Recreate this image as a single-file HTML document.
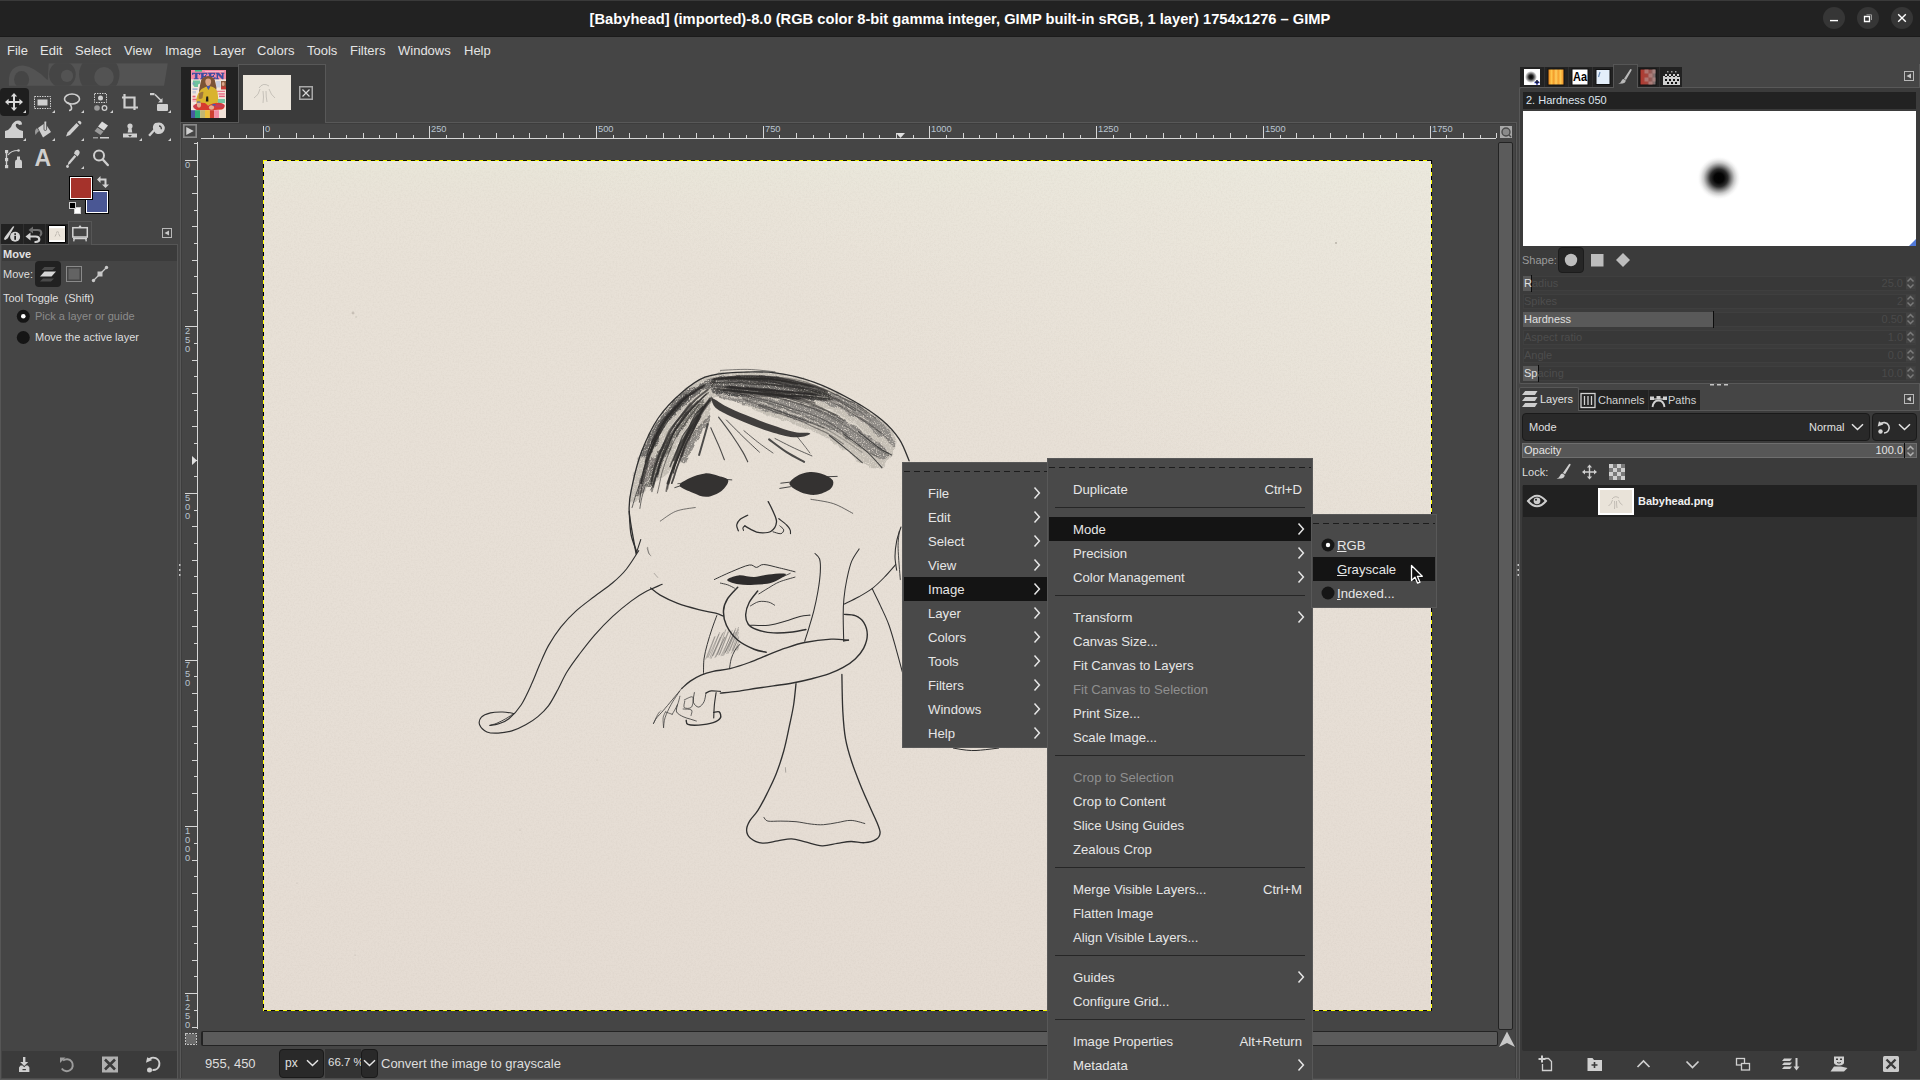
<!DOCTYPE html>
<html lang="en">
<head>
<meta charset="utf-8">
<title>[Babyhead] (imported)-8.0 – GIMP</title>
<style>
*{box-sizing:border-box;margin:0;padding:0}
html,body{width:1920px;height:1080px;overflow:hidden;background:#454545}
body{font-family:"Liberation Sans",sans-serif;font-size:13px;color:#dedede;position:relative;-webkit-font-smoothing:antialiased}
.abs{position:absolute}
.t{position:absolute;white-space:nowrap;line-height:1}
svg{position:absolute;overflow:visible}
#titlebar{position:absolute;left:0;top:0;width:1920px;height:37px;background:#222222;border-top:1px solid #3a3a3a;border-bottom:1px solid #1b1b1b}
#title{position:absolute;left:0;width:1920px;top:10px;text-align:center;font-weight:700;font-size:14.7px;color:#ffffff;line-height:17px;letter-spacing:0}
.wbtn{position:absolute;top:6px;width:22px;height:22px;border-radius:50%;background:#363636}
#menubar{position:absolute;left:0;top:37px;width:1920px;height:27px;background:#454545}
#menubar span{position:absolute;top:5px;font-size:13px;line-height:17px;color:#e4e4e4}
.menu{position:absolute;background:#494949;border:1px solid #585858}
.mi{position:absolute;left:1px;right:1px;height:24px;font-size:13.15px;line-height:26px;color:#e6e6e6;white-space:nowrap}
.mi.sel{background:#141414}
.mi.dis{color:#8f8f8f}
.mi b{font-weight:400;position:absolute;right:9px;top:0}
.mi u{text-decoration:underline;text-underline-offset:1px}
.sep{position:absolute;height:1px;background:#262626}
.tear{position:absolute;height:1px;background:repeating-linear-gradient(90deg,#1c1c1c 0,#1c1c1c 6px,transparent 6px,transparent 10px)}
.arr{position:absolute;width:10px;height:14px}
</style>
</head>
<body>
<div id="titlebar">
  <div id="title">[Babyhead] (imported)-8.0 (RGB color 8-bit gamma integer, GIMP built-in sRGB, 1 layer) 1754x1276 – GIMP</div>
  <div class="wbtn" style="left:1823px"></div>
  <div class="wbtn" style="left:1857px"></div>
  <div class="wbtn" style="left:1891px"></div>
  <svg style="left:1822px;top:6px" width="92" height="23" viewBox="0 0 92 23">
    <path d="M8 13.600h8" stroke="#fff" stroke-width="1.400" fill="none"/>
    <path d="M42.500 9.500h5v5h-5z" stroke="#fff" stroke-width="1.300" fill="none"/><path d="M44.500 7.800h5v5.200" stroke="#9a9a9a" stroke-width="1" fill="none"/>
    <path d="M76.200 7.200l7.600 7.600 M83.800 7.200l-7.600 7.600" stroke="#fff" stroke-width="1.400" fill="none"/>
  </svg>
</div>
<div id="menubar">
  <span style="left:7px">File</span><span style="left:40px">Edit</span><span style="left:75px">Select</span><span style="left:124px">View</span><span style="left:165px">Image</span><span style="left:213px">Layer</span><span style="left:257px">Colors</span><span style="left:307px">Tools</span><span style="left:350px">Filters</span><span style="left:398px">Windows</span><span style="left:464px">Help</span>
</div>
<div class="abs" style="left:181px;top:67px;width:57px;height:55px;background:#222222"></div>
<div class="abs" style="left:238px;top:64px;width:88px;height:59px;background:#3b3b3b;border:1px solid #585858;border-bottom:none"></div>
<div class="abs" style="left:180px;top:122px;width:1337px;height:957px;border:1px solid #585858;border-bottom:none;box-shadow:inset 1px 1px 0 #3d3d3d,inset -1px 0 0 #3d3d3d"></div>
<div class="abs" style="left:239px;top:122px;width:86px;height:1px;background:#3b3b3b"></div>
<svg style="left:191px;top:70px;overflow:hidden" width="35" height="48" viewBox="0 0 35 48">
<defs><filter id="tb" x="-5%" y="-5%" width="110%" height="110%"><feGaussianBlur stdDeviation="0.45"/></filter><clipPath id="tc"><rect width="35" height="48"/></clipPath></defs>
<g clip-path="url(#tc)"><rect width="35" height="48" fill="#f3e6dc"/>
<g filter="url(#tb)">
<rect x="-1" y="-1" width="37" height="10.300" fill="#f58aa6"/>
<rect x="4" y="0" width="7" height="1.600" fill="#3dbb84"/><rect x="14" y="1" width="19" height=".800" fill="#f7c3cf"/>
<text x="1.300" y="8.800" font-family="Liberation Serif,serif" font-weight="700" font-size="8.600" fill="#3a4da2" stroke="#3a4da2" stroke-width=".500" textLength="32" lengthAdjust="spacingAndGlyphs">TEEN</text>
<path d="M2 10.500h7v3l-2 1v2.500h-3.500l-1.500-2z" fill="#58bd92" opacity=".85"/><rect x="1.300" y="12.500" width="2.500" height="2" fill="#7f95c8" opacity=".7"/>
<rect x="1.500" y="18.500" width="5" height="1.200" fill="#6b83c0" opacity=".8"/><rect x="1.500" y="21" width="3.500" height="2.500" fill="#a9b4d6" opacity=".6"/>
<rect x="1.500" y="25.700" width="3" height="1.700" fill="#e8607c"/><rect x="1.500" y="28.700" width="6.500" height="1.500" fill="#e8607c"/><rect x="1.500" y="30.500" width="4" height="1.200" fill="#ec9aa8" opacity=".8"/>
<rect x="25" y="11" width="4.500" height="6.500" fill="#b9c3de" opacity=".7"/>
<rect x="30" y="11" width="5" height="8.300" fill="#8a5a3e"/><ellipse cx="32.200" cy="14" rx="1.400" ry="1.900" fill="#dca58a"/><path d="M30 16.800q2.300-1.200 5 0v2.500h-5z" fill="#c63a34"/>
<rect x="24.500" y="20.800" width="9.500" height="1" fill="#e8607c"/><rect x="27.500" y="23.300" width="6.300" height="1.300" fill="#e8607c"/><rect x="28" y="25.600" width="5.800" height="1.500" fill="#e8607c"/>
<path d="M26.500 29h7.500v4h-7l-1-1.500z" fill="#5fc29a" opacity=".85"/>
<path d="M9.500 13 Q10 6.500 17 6 Q24 6.500 24.500 13 Q26 18 25 21 L12.500 22 Q10.500 27.500 8 27 Q7.500 20 9.500 13Z" fill="#7c5336"/>
<path d="M14.300 11.500Q14.300 8.400 17.200 8.400Q20.200 8.400 20.100 11.500Q20 15 17.200 16.400Q14.400 15 14.300 11.500Z" fill="#dba486"/>
<path d="M5.500 33 Q4.500 27 8.500 21.500 Q11 18 15.500 16.500 L17.500 19.500 L19.300 16.300 Q25 17.500 26.500 22 Q27.800 28 26.500 33 L22 35 L9 35Z" fill="#d9b32f"/>
<path d="M15.500 16.500L17.500 20L19.300 16.300L18 15.800L16.700 15.900Z" fill="#3f59b4"/>
<path d="M15.300 26.500h1.900l.2 5h-2.600z" fill="#1b1b1b"/>
<path d="M8 23.500q2.500-2.500 4.500-1.500l-1 6q-2 1.500-4 .5z" fill="#8a6040" opacity=".75"/>
<path d="M2 36 Q6 31.500 14 33 L17 35.500 L22 33.500 Q30 31.500 33.700 35 Q34 38 31 39.500 L20 40.300 L8 40.300 Q3 40 2 36Z" fill="#d63a2f"/>
<path d="M24 34.500h8.500v3h-8.500z" fill="#b8407a" opacity=".55"/><path d="M2.500 34.500h3.500v4h-3.500z" fill="#b8407a" opacity=".4"/>
<ellipse cx="8" cy="34.800" rx="2.100" ry="2.800" fill="#e3ae93"/><ellipse cx="20.500" cy="37.500" rx="2.600" ry="2.200" fill="#e3ae93"/>
<rect x="6" y="31.500" width="3.300" height="1.100" fill="#3f59b4"/><rect x="21.500" y="34" width="3" height="1.600" fill="#3f59b4"/>
</g>
<rect x="0" y="40.200" width="4" height="8" fill="#4a58a0"/><rect x="4" y="40.200" width="5.200" height="8" fill="#2fae78"/><rect x="9.200" y="40.200" width="4.800" height="8" fill="#c2b672"/><rect x="14" y="40.200" width="4.900" height="8" fill="#efc03c"/><rect x="18.900" y="40.200" width="4.200" height="8" fill="#cf4030"/><rect x="23.100" y="40.200" width="4.900" height="8" fill="#f28ea6"/><rect x="28" y="40.200" width="7" height="8" fill="#f1e2d8"/>
</g></svg>
<svg style="left:243px;top:75px" width="48" height="35" viewBox="0 0 48 35"><rect width="48" height="35" fill="#ebe5db"/>
<path d="M16 13 q4 -6 10 -2 M17 14 q-1 6 -6 9 M26 14 q2 6 6 9 M20 16 q1 6 0 12 M23 16 q0 6 1 11" stroke="#8a8580" stroke-width=".7" fill="none" opacity=".55"/></svg>
<svg style="left:299px;top:86px" width="14" height="14" viewBox="0 0 14 14"><rect x=".75" y=".75" width="12.5" height="12.5" fill="none" stroke="#a8a8a8" stroke-width="1.5"/><path d="M3.5 3.5l7 7M10.5 3.5l-7 7" stroke="#d8d8d8" stroke-width="1.2"/></svg>
<svg style="left:0;top:0" width="1920" height="1080" viewBox="0 0 1920 1080" shape-rendering="crispEdges"><rect x="201" y="138" width="1295" height="1" fill="#d6d6d6"/><rect x="213" y="135" width="1" height="3" fill="#d6d6d6"/><rect x="229" y="133" width="1" height="5" fill="#d6d6d6"/><rect x="246" y="135" width="1" height="3" fill="#d6d6d6"/><rect x="263" y="126" width="1" height="12" fill="#d6d6d6"/><rect x="279" y="135" width="1" height="3" fill="#d6d6d6"/><rect x="296" y="133" width="1" height="5" fill="#d6d6d6"/><rect x="313" y="135" width="1" height="3" fill="#d6d6d6"/><rect x="329" y="133" width="1" height="5" fill="#d6d6d6"/><rect x="346" y="135" width="1" height="3" fill="#d6d6d6"/><rect x="363" y="133" width="1" height="5" fill="#d6d6d6"/><rect x="379" y="135" width="1" height="3" fill="#d6d6d6"/><rect x="396" y="133" width="1" height="5" fill="#d6d6d6"/><rect x="413" y="135" width="1" height="3" fill="#d6d6d6"/><rect x="429" y="126" width="1" height="12" fill="#d6d6d6"/><rect x="446" y="135" width="1" height="3" fill="#d6d6d6"/><rect x="463" y="133" width="1" height="5" fill="#d6d6d6"/><rect x="479" y="135" width="1" height="3" fill="#d6d6d6"/><rect x="496" y="133" width="1" height="5" fill="#d6d6d6"/><rect x="513" y="135" width="1" height="3" fill="#d6d6d6"/><rect x="529" y="133" width="1" height="5" fill="#d6d6d6"/><rect x="546" y="135" width="1" height="3" fill="#d6d6d6"/><rect x="563" y="133" width="1" height="5" fill="#d6d6d6"/><rect x="579" y="135" width="1" height="3" fill="#d6d6d6"/><rect x="596" y="126" width="1" height="12" fill="#d6d6d6"/><rect x="613" y="135" width="1" height="3" fill="#d6d6d6"/><rect x="629" y="133" width="1" height="5" fill="#d6d6d6"/><rect x="646" y="135" width="1" height="3" fill="#d6d6d6"/><rect x="663" y="133" width="1" height="5" fill="#d6d6d6"/><rect x="679" y="135" width="1" height="3" fill="#d6d6d6"/><rect x="696" y="133" width="1" height="5" fill="#d6d6d6"/><rect x="713" y="135" width="1" height="3" fill="#d6d6d6"/><rect x="729" y="133" width="1" height="5" fill="#d6d6d6"/><rect x="746" y="135" width="1" height="3" fill="#d6d6d6"/><rect x="763" y="126" width="1" height="12" fill="#d6d6d6"/><rect x="779" y="135" width="1" height="3" fill="#d6d6d6"/><rect x="796" y="133" width="1" height="5" fill="#d6d6d6"/><rect x="813" y="135" width="1" height="3" fill="#d6d6d6"/><rect x="829" y="133" width="1" height="5" fill="#d6d6d6"/><rect x="846" y="135" width="1" height="3" fill="#d6d6d6"/><rect x="863" y="133" width="1" height="5" fill="#d6d6d6"/><rect x="879" y="135" width="1" height="3" fill="#d6d6d6"/><rect x="896" y="133" width="1" height="5" fill="#d6d6d6"/><rect x="913" y="135" width="1" height="3" fill="#d6d6d6"/><rect x="929" y="126" width="1" height="12" fill="#d6d6d6"/><rect x="946" y="135" width="1" height="3" fill="#d6d6d6"/><rect x="963" y="133" width="1" height="5" fill="#d6d6d6"/><rect x="979" y="135" width="1" height="3" fill="#d6d6d6"/><rect x="996" y="133" width="1" height="5" fill="#d6d6d6"/><rect x="1013" y="135" width="1" height="3" fill="#d6d6d6"/><rect x="1029" y="133" width="1" height="5" fill="#d6d6d6"/><rect x="1046" y="135" width="1" height="3" fill="#d6d6d6"/><rect x="1063" y="133" width="1" height="5" fill="#d6d6d6"/><rect x="1080" y="135" width="1" height="3" fill="#d6d6d6"/><rect x="1096" y="126" width="1" height="12" fill="#d6d6d6"/><rect x="1113" y="135" width="1" height="3" fill="#d6d6d6"/><rect x="1130" y="133" width="1" height="5" fill="#d6d6d6"/><rect x="1146" y="135" width="1" height="3" fill="#d6d6d6"/><rect x="1163" y="133" width="1" height="5" fill="#d6d6d6"/><rect x="1180" y="135" width="1" height="3" fill="#d6d6d6"/><rect x="1196" y="133" width="1" height="5" fill="#d6d6d6"/><rect x="1213" y="135" width="1" height="3" fill="#d6d6d6"/><rect x="1230" y="133" width="1" height="5" fill="#d6d6d6"/><rect x="1246" y="135" width="1" height="3" fill="#d6d6d6"/><rect x="1263" y="126" width="1" height="12" fill="#d6d6d6"/><rect x="1280" y="135" width="1" height="3" fill="#d6d6d6"/><rect x="1296" y="133" width="1" height="5" fill="#d6d6d6"/><rect x="1313" y="135" width="1" height="3" fill="#d6d6d6"/><rect x="1330" y="133" width="1" height="5" fill="#d6d6d6"/><rect x="1346" y="135" width="1" height="3" fill="#d6d6d6"/><rect x="1363" y="133" width="1" height="5" fill="#d6d6d6"/><rect x="1380" y="135" width="1" height="3" fill="#d6d6d6"/><rect x="1396" y="133" width="1" height="5" fill="#d6d6d6"/><rect x="1413" y="135" width="1" height="3" fill="#d6d6d6"/><rect x="1430" y="126" width="1" height="12" fill="#d6d6d6"/><rect x="1446" y="135" width="1" height="3" fill="#d6d6d6"/><rect x="1463" y="133" width="1" height="5" fill="#d6d6d6"/><rect x="1480" y="135" width="1" height="3" fill="#d6d6d6"/><rect x="1496" y="133" width="1" height="5" fill="#d6d6d6"/><rect x="197" y="142" width="1" height="887" fill="#d6d6d6"/><rect x="194" y="143" width="3" height="1" fill="#d6d6d6"/><rect x="185" y="160" width="12" height="1" fill="#d6d6d6"/><rect x="194" y="176" width="3" height="1" fill="#d6d6d6"/><rect x="192" y="193" width="5" height="1" fill="#d6d6d6"/><rect x="194" y="210" width="3" height="1" fill="#d6d6d6"/><rect x="192" y="226" width="5" height="1" fill="#d6d6d6"/><rect x="194" y="243" width="3" height="1" fill="#d6d6d6"/><rect x="192" y="260" width="5" height="1" fill="#d6d6d6"/><rect x="194" y="276" width="3" height="1" fill="#d6d6d6"/><rect x="192" y="293" width="5" height="1" fill="#d6d6d6"/><rect x="194" y="310" width="3" height="1" fill="#d6d6d6"/><rect x="185" y="326" width="12" height="1" fill="#d6d6d6"/><rect x="194" y="343" width="3" height="1" fill="#d6d6d6"/><rect x="192" y="360" width="5" height="1" fill="#d6d6d6"/><rect x="194" y="376" width="3" height="1" fill="#d6d6d6"/><rect x="192" y="393" width="5" height="1" fill="#d6d6d6"/><rect x="194" y="410" width="3" height="1" fill="#d6d6d6"/><rect x="192" y="426" width="5" height="1" fill="#d6d6d6"/><rect x="194" y="443" width="3" height="1" fill="#d6d6d6"/><rect x="192" y="460" width="5" height="1" fill="#d6d6d6"/><rect x="194" y="476" width="3" height="1" fill="#d6d6d6"/><rect x="185" y="493" width="12" height="1" fill="#d6d6d6"/><rect x="194" y="510" width="3" height="1" fill="#d6d6d6"/><rect x="192" y="526" width="5" height="1" fill="#d6d6d6"/><rect x="194" y="543" width="3" height="1" fill="#d6d6d6"/><rect x="192" y="560" width="5" height="1" fill="#d6d6d6"/><rect x="194" y="576" width="3" height="1" fill="#d6d6d6"/><rect x="192" y="593" width="5" height="1" fill="#d6d6d6"/><rect x="194" y="610" width="3" height="1" fill="#d6d6d6"/><rect x="192" y="626" width="5" height="1" fill="#d6d6d6"/><rect x="194" y="643" width="3" height="1" fill="#d6d6d6"/><rect x="185" y="660" width="12" height="1" fill="#d6d6d6"/><rect x="194" y="676" width="3" height="1" fill="#d6d6d6"/><rect x="192" y="693" width="5" height="1" fill="#d6d6d6"/><rect x="194" y="710" width="3" height="1" fill="#d6d6d6"/><rect x="192" y="726" width="5" height="1" fill="#d6d6d6"/><rect x="194" y="743" width="3" height="1" fill="#d6d6d6"/><rect x="192" y="760" width="5" height="1" fill="#d6d6d6"/><rect x="194" y="776" width="3" height="1" fill="#d6d6d6"/><rect x="192" y="793" width="5" height="1" fill="#d6d6d6"/><rect x="194" y="810" width="3" height="1" fill="#d6d6d6"/><rect x="185" y="826" width="12" height="1" fill="#d6d6d6"/><rect x="194" y="843" width="3" height="1" fill="#d6d6d6"/><rect x="192" y="860" width="5" height="1" fill="#d6d6d6"/><rect x="194" y="876" width="3" height="1" fill="#d6d6d6"/><rect x="192" y="893" width="5" height="1" fill="#d6d6d6"/><rect x="194" y="910" width="3" height="1" fill="#d6d6d6"/><rect x="192" y="926" width="5" height="1" fill="#d6d6d6"/><rect x="194" y="943" width="3" height="1" fill="#d6d6d6"/><rect x="192" y="960" width="5" height="1" fill="#d6d6d6"/><rect x="194" y="976" width="3" height="1" fill="#d6d6d6"/><rect x="185" y="993" width="12" height="1" fill="#d6d6d6"/><rect x="194" y="1010" width="3" height="1" fill="#d6d6d6"/><rect x="192" y="1027" width="5" height="1" fill="#d6d6d6"/></svg>
<div class="t" style="left:265px;top:125px;font-size:9.3px;color:#b9c4cf">0</div>
<div class="t" style="left:431px;top:125px;font-size:9.3px;color:#b9c4cf">250</div>
<div class="t" style="left:598px;top:125px;font-size:9.3px;color:#b9c4cf">500</div>
<div class="t" style="left:765px;top:125px;font-size:9.3px;color:#b9c4cf">750</div>
<div class="t" style="left:931px;top:125px;font-size:9.3px;color:#b9c4cf">1000</div>
<div class="t" style="left:1098px;top:125px;font-size:9.3px;color:#b9c4cf">1250</div>
<div class="t" style="left:1265px;top:125px;font-size:9.3px;color:#b9c4cf">1500</div>
<div class="t" style="left:1432px;top:125px;font-size:9.3px;color:#b9c4cf">1750</div>
<div class="t" style="left:185px;top:161px;font-size:9.3px;color:#b9c4cf">0</div>
<div class="t" style="left:185px;top:327px;font-size:9.3px;color:#b9c4cf">2</div>
<div class="t" style="left:185px;top:336px;font-size:9.3px;color:#b9c4cf">5</div>
<div class="t" style="left:185px;top:345px;font-size:9.3px;color:#b9c4cf">0</div>
<div class="t" style="left:185px;top:494px;font-size:9.3px;color:#b9c4cf">5</div>
<div class="t" style="left:185px;top:503px;font-size:9.3px;color:#b9c4cf">0</div>
<div class="t" style="left:185px;top:512px;font-size:9.3px;color:#b9c4cf">0</div>
<div class="t" style="left:185px;top:661px;font-size:9.3px;color:#b9c4cf">7</div>
<div class="t" style="left:185px;top:670px;font-size:9.3px;color:#b9c4cf">5</div>
<div class="t" style="left:185px;top:679px;font-size:9.3px;color:#b9c4cf">0</div>
<div class="t" style="left:185px;top:827px;font-size:9.3px;color:#b9c4cf">1</div>
<div class="t" style="left:185px;top:836px;font-size:9.3px;color:#b9c4cf">0</div>
<div class="t" style="left:185px;top:845px;font-size:9.3px;color:#b9c4cf">0</div>
<div class="t" style="left:185px;top:854px;font-size:9.3px;color:#b9c4cf">0</div>
<div class="t" style="left:185px;top:994px;font-size:9.3px;color:#b9c4cf">1</div>
<div class="t" style="left:185px;top:1003px;font-size:9.3px;color:#b9c4cf">2</div>
<div class="t" style="left:185px;top:1012px;font-size:9.3px;color:#b9c4cf">5</div>
<div class="t" style="left:185px;top:1021px;font-size:9.3px;color:#b9c4cf">0</div>
<svg style="left:183px;top:124px" width="14" height="14" viewBox="0 0 13 13"><rect x=".75" y=".75" width="11.5" height="11.5" fill="none" stroke="#8a8a8a" stroke-width="1.5"/><path d="M3 2.8v7.4l7-3.7z" fill="#d0d0d0"/></svg>
<svg style="left:1500px;top:126px" width="12" height="12" viewBox="0 0 12 12"><rect width="12" height="12" fill="#a8a8a8"/><circle cx="6" cy="6" r="4" fill="#8a8a8a" stroke="#4a4a4a" stroke-width="1.4"/><path d="M9 9l2 2" stroke="#4a4a4a" stroke-width="1.4"/></svg>
<svg style="left:185px;top:1033px" width="12" height="12" viewBox="0 0 12 12" shape-rendering="crispEdges"><rect x="1" y="1" width="10" height="10" fill="#6a6a6a"/><rect x=".5" y=".5" width="11" height="11" fill="none" stroke="#c0c0c0" stroke-width="1" stroke-dasharray="2 1"/></svg>
<svg style="left:1499px;top:1031px" width="16" height="16" viewBox="0 0 16 16"><path d="M8 0.5L16 16L8 12L0 16Z" fill="#c8c8c8"/></svg>
<svg style="left:896px;top:133px" width="9" height="5" viewBox="0 0 9 5"><path d="M0 0h9l-4.500 5z" fill="#e0e0e0"/></svg>
<svg style="left:192px;top:456px" width="5" height="9" viewBox="0 0 5 9"><path d="M0 0v9l5-4.500z" fill="#e0e0e0"/></svg>
<div class="abs" style="left:1498px;top:142px;width:15px;height:888px;background:#5b5b5b;border:1px solid #232323;border-radius:2px"></div>
<div class="abs" style="left:201px;top:1031px;width:1297px;height:15px;background:#5b5b5b;border:1px solid #232323;border-left-width:2px;border-radius:2px"></div>
<div class="abs" id="paper" style="left:263px;top:160px;width:1169px;height:851px;background:linear-gradient(205deg,rgba(237,235,224,.65) 0%,rgba(237,235,224,0) 32%),linear-gradient(180deg,#e9e6d9 0%,#e9e3d8 5%,#e8e1d7 14%,#e7dfd6 60%,#e5dcd3 100%)"></div>
<svg style="left:263px;top:160px" width="1169" height="851" viewBox="0 0 1169 851"><defs><filter id="papernoise" x="0" y="0" width="100%" height="100%"><feTurbulence type="fractalNoise" baseFrequency="0.6" numOctaves="2" seed="11"/><feColorMatrix type="matrix" values="0 0 0 0 0.35  0 0 0 0 0.30  0 0 0 0 0.25  0 0 0 1.6 -0.62"/></filter></defs><rect width="1169" height="851" filter="url(#papernoise)" opacity="0.10"/></svg>
<div class="abs ants" style="left:263px;top:160px;width:1169px;height:1px;background:repeating-linear-gradient(90deg,#ffff00 0,#ffff00 4px,#000 4px,#000 8px)"></div>
<div class="abs ants" style="left:263px;top:1010px;width:1169px;height:1px;background:repeating-linear-gradient(90deg,#000 0,#000 4px,#ffff00 4px,#ffff00 8px)"></div>
<div class="abs ants" style="left:263px;top:160px;width:1px;height:851px;background:repeating-linear-gradient(180deg,#ffff00 0,#ffff00 4px,#000 4px,#000 8px)"></div>
<div class="abs ants" style="left:1431px;top:160px;width:1px;height:851px;background:repeating-linear-gradient(180deg,#000 0,#000 4px,#ffff00 4px,#ffff00 8px)"></div>
<svg id="drawing" style="left:0;top:0" width="1920" height="1080" viewBox="0 0 1920 1080">
<defs><filter id="rough" x="-5%" y="-5%" width="110%" height="110%"><feTurbulence type="fractalNoise" baseFrequency="0.11" numOctaves="2" seed="4" result="n1"/><feDisplacementMap in="SourceGraphic" in2="n1" scale="6" xChannelSelector="R" yChannelSelector="G" result="d"/><feTurbulence type="fractalNoise" baseFrequency="0.85" numOctaves="1" seed="7" result="n2"/><feColorMatrix in="n2" type="matrix" values="0 0 0 0 0  0 0 0 0 0  0 0 0 0 0  0 0 0 3.4 -0.62" result="mask"/><feComposite in="d" in2="mask" operator="in"/></filter></defs>
<g filter="url(#rough)">
<path d="M708.9 375.3 C718.0 371.9 725.1 372.7 736.1 372.4 C747.1 372.1 762.0 371.6 775.0 373.3 C788.0 375.0 800.8 378.1 813.8 382.7 C826.8 387.3 841.4 394.6 852.7 400.9 C864.1 407.2 874.5 413.6 881.9 420.4 C889.3 427.1 897.4 433.7 897.4 441.4 C897.4 449.1 888.0 463.2 881.9 466.6 C875.8 470.0 870.2 466.8 860.5 461.8 C850.8 456.8 834.6 442.7 823.6 436.5 C812.6 430.3 805.8 429.2 794.4 424.8 C783.0 420.4 768.5 415.0 755.5 410.3 C742.5 405.6 724.4 396.1 716.6 396.7 C708.8 397.3 713.1 407.1 708.9 414.2 C704.7 421.3 697.2 430.7 691.4 439.4 C685.6 448.1 680.7 458.8 673.9 466.6 C667.1 474.4 657.3 479.9 650.5 486.1 C643.7 492.3 636.2 503.6 633.0 503.6 C629.8 503.6 629.6 494.9 631.1 486.1 C632.6 477.4 637.3 462.5 641.8 451.1 C646.3 439.8 651.7 427.7 658.3 418.0 C664.9 408.3 673.2 399.9 681.6 392.8 C690.0 385.7 699.8 378.7 708.9 375.3Z" fill="#4a4744" opacity="0.22" stroke="none"/>
<path d="M711.8 379.2 C715.4 376.3 725.6 376.5 736.1 376.2 C746.6 375.9 763.7 375.9 775.0 377.2 C786.3 378.5 795.0 381.2 804.1 384.0 C813.2 386.8 825.8 390.9 829.4 393.7 C833.0 396.5 831.3 400.1 825.5 400.9 C819.7 401.7 804.4 399.2 794.4 398.6 C784.4 398.1 774.9 398.1 765.2 397.6 C755.5 397.1 744.5 396.4 736.1 395.7 C727.7 395.0 718.8 396.4 714.7 393.7 C710.7 390.9 708.2 382.1 711.8 379.2Z" fill="#2e2c2b" opacity="0.55" stroke="none"/>
<path d="M716.6 389.9 C722.8 389.9 742.5 394.8 755.5 396.7 C768.5 398.6 781.4 398.6 794.4 401.5 C807.4 404.4 822.0 409.2 833.3 414.2 C844.6 419.2 853.3 425.5 862.4 431.6 C871.5 437.8 884.8 446.6 887.7 451.1 C890.6 455.7 885.7 460.5 879.9 458.9 C874.1 457.3 862.1 446.6 852.7 441.4 C843.3 436.2 834.0 431.7 823.6 427.8 C813.2 423.9 801.9 421.4 790.5 418.0 C779.1 414.6 767.5 410.9 755.5 407.3 C743.5 403.8 725.1 399.6 718.6 396.7 C712.1 393.8 710.5 389.9 716.6 389.9Z" fill="#3a3836" opacity="0.4" stroke="none"/>
<path d="M798.3 387.9 C801.9 387.2 814.5 389.4 823.6 391.8 C832.7 394.2 844.0 398.1 852.7 402.5 C861.4 406.9 869.5 412.5 876.0 418.0 C882.5 423.5 888.4 430.6 891.6 435.5 C894.9 440.4 897.5 447.2 895.5 447.2 C893.5 447.2 886.4 440.4 879.9 435.5 C873.4 430.6 865.0 423.2 856.6 418.0 C848.2 412.8 838.5 408.1 829.4 404.4 C820.3 400.7 807.4 398.4 802.2 395.7 C797.0 392.9 794.7 388.5 798.3 387.9Z" fill="#3a3836" opacity="0.38" stroke="none"/>
<path d="M709.8 379.2 C705.1 380.5 693.4 386.0 685.5 391.8 C677.6 397.6 668.7 405.9 662.2 414.2 C655.7 422.5 650.1 434.6 646.7 441.4 C643.3 448.2 641.3 452.7 641.8 455.0 C642.3 457.3 645.9 459.5 649.6 455.0 C653.3 450.5 658.9 435.6 664.2 427.8 C669.5 420.0 675.5 414.3 681.6 408.3 C687.8 402.3 695.8 395.9 701.1 391.8 C706.5 387.8 712.2 386.1 713.7 384.0 C715.2 381.9 714.5 377.9 709.8 379.2Z" fill="#2e2c2b" opacity="0.55" stroke="none"/>
<path d="M701.1 399.6 C697.1 401.9 687.8 411.0 681.6 418.0 C675.5 425.0 669.1 433.3 664.2 441.4 C659.4 449.5 655.4 459.2 652.5 466.6 C649.6 474.1 646.5 483.2 646.7 486.1 C646.9 489.0 650.6 488.6 653.5 484.1 C656.4 479.6 660.2 467.0 664.2 458.9 C668.2 450.8 672.9 442.6 677.8 435.5 C682.6 428.4 688.6 421.3 693.3 416.1 C698.0 410.9 704.6 407.1 705.9 404.4 C707.2 401.6 705.1 397.3 701.1 399.6Z" fill="#33312f" opacity="0.5" stroke="none"/>
<path d="M708.9 415.1 C706.8 416.2 700.8 423.1 697.2 427.8 C693.6 432.5 690.2 438.0 687.5 443.3 C684.8 448.6 681.0 456.8 680.7 459.8 C680.4 462.8 683.1 463.9 685.5 461.2 C687.9 458.4 692.2 448.6 695.3 443.3 C698.4 438.1 701.6 433.4 704.0 429.7 C706.4 426.0 709.0 423.4 709.8 421.0 C710.6 418.6 711.0 414.0 708.9 415.1Z" fill="#33312f" opacity="0.5" stroke="none"/>
<path d="M650.5 458.9 C648.2 461.3 644.1 470.6 641.8 476.4 C639.5 482.2 636.9 491.1 636.9 493.9 C636.9 496.6 639.8 495.8 641.8 492.9 C643.8 490.0 646.3 481.6 648.6 476.4 C650.9 471.2 655.1 464.7 655.4 461.8 C655.7 458.9 652.8 456.5 650.5 458.9Z" fill="#3a3836" opacity="0.45" stroke="none"/>
<path d="M714.7 388.9 C721.5 389.9 742.2 393.2 755.5 395.1 C768.8 397.0 781.4 397.5 794.4 400.2 C807.4 402.9 826.8 409.4 833.3 411.2" fill="none" stroke="#e9e3d9" stroke-width="1.41" opacity="0.55" stroke-linecap="round" stroke-linejoin="round"/>
<path d="M716.6 393.7 C723.7 395.3 745.1 399.6 759.4 403.5 C773.7 407.4 788.3 411.8 802.2 417.1 C816.1 422.4 836.2 432.4 843.0 435.5" fill="none" stroke="#e9e3d9" stroke-width="1.41" opacity="0.55" stroke-linecap="round" stroke-linejoin="round"/>
<path d="M794.4 391.8 C800.9 393.4 821.0 396.6 833.3 401.5 C845.6 406.4 862.5 417.8 868.3 421.0" fill="none" stroke="#e9e3d9" stroke-width="1.41" opacity="0.55" stroke-linecap="round" stroke-linejoin="round"/>
<path d="M705.9 394.7 C701.9 397.9 688.9 406.4 681.6 414.2 C674.3 422.0 665.4 436.9 662.2 441.4" fill="none" stroke="#e9e3d9" stroke-width="1.41" opacity="0.55" stroke-linecap="round" stroke-linejoin="round"/>
<path d="M707.9 406.4 C704.8 409.6 695.1 418.4 689.4 425.8 C683.7 433.2 676.5 446.9 673.9 451.1" fill="none" stroke="#e9e3d9" stroke-width="1.41" opacity="0.55" stroke-linecap="round" stroke-linejoin="round"/>
<path d="M823.6 408.3 C828.5 410.9 843.6 418.1 852.7 423.9 C861.8 429.7 873.8 440.1 878.0 443.3" fill="none" stroke="#e9e3d9" stroke-width="1.41" opacity="0.55" stroke-linecap="round" stroke-linejoin="round"/>
</g>
<path d="M712.8 398.6 C714.6 398.6 718.9 402.6 724.4 405.4 C729.9 408.1 738.0 411.9 745.8 415.1 C753.6 418.3 763.0 422.0 771.1 424.8 C779.2 427.6 787.9 430.6 794.4 432.0 C800.9 433.4 808.3 432.4 809.9 433.2 C811.5 433.9 807.3 435.9 804.1 436.5 C800.9 437.1 796.6 437.9 790.5 436.9 C784.4 435.9 775.0 433.2 767.2 430.7 C759.4 428.2 751.4 425.0 743.9 421.9 C736.4 418.8 727.5 414.9 722.5 412.2 C717.5 409.4 715.3 407.7 713.7 405.4 C712.1 403.1 711.0 398.6 712.8 398.6Z" fill="#2a2828" opacity="0.88" stroke="none"/>
<path d="M758.8 405.7 C761.4 406.7 769.1 409.7 774.3 411.6 C779.5 413.5 785.0 415.3 789.8 417.0 C794.6 418.7 798.5 420.1 802.9 422.0 C807.3 423.9 811.7 426.0 816.1 428.1 C820.5 430.2 825.0 431.7 829.5 434.4 C834.0 437.1 841.1 442.5 843.4 444.1" fill="none" stroke="#2c2a29" stroke-width="1.19" opacity="0.48" stroke-linecap="round"/>
<path d="M757.0 377.1 C758.5 377.1 763.1 377.2 765.9 377.3 C768.7 377.4 771.0 377.2 773.8 377.4 C776.6 377.6 779.6 378.2 782.6 378.7 C785.6 379.2 788.9 379.6 791.9 380.3 C794.9 381.0 797.7 382.2 800.7 383.0 C803.8 383.8 808.6 384.5 810.2 384.8" fill="none" stroke="#2c2a29" stroke-width="1.35" opacity="0.28" stroke-linecap="round"/>
<path d="M728.3 386.2 C730.3 386.4 736.2 386.8 740.5 387.4 C744.8 388.0 749.5 389.3 753.9 390.0 C758.2 390.7 762.0 390.8 766.6 391.7 C771.2 392.6 776.8 393.9 781.7 395.1 C786.6 396.3 791.7 397.7 796.2 399.0 C800.7 400.3 806.5 402.3 808.6 403.0" fill="none" stroke="#2c2a29" stroke-width="1.22" opacity="0.34" stroke-linecap="round"/>
<path d="M727.9 380.6 C729.6 380.5 734.6 380.1 738.3 380.1 C742.0 380.1 746.1 380.2 750.3 380.5 C754.5 380.8 759.3 381.5 763.6 381.9 C767.9 382.3 771.5 382.1 776.0 382.8 C780.5 383.6 786.2 385.4 790.8 386.4 C795.4 387.4 801.6 388.6 803.7 389.0" fill="none" stroke="#2c2a29" stroke-width="0.92" opacity="0.6" stroke-linecap="round"/>
<path d="M756.5 378.6 C758.6 378.9 764.6 379.7 769.1 380.2 C773.6 380.7 778.4 380.6 783.2 381.4 C788.0 382.1 793.2 383.5 797.9 384.7 C802.6 385.9 806.7 386.9 811.3 388.5 C815.9 390.1 820.9 392.0 825.6 394.0 C830.3 396.0 837.2 399.2 839.5 400.3" fill="none" stroke="#2c2a29" stroke-width="1.07" opacity="0.34" stroke-linecap="round"/>
<path d="M734.1 392.7 C737.1 393.4 746.0 395.7 752.3 397.2 C758.6 398.7 765.0 399.8 771.8 401.7 C778.6 403.6 786.6 406.8 793.0 408.9 C799.4 410.9 804.4 411.7 810.4 414.0 C816.4 416.3 823.0 419.2 829.1 422.7 C835.2 426.2 844.2 432.9 847.2 434.9" fill="none" stroke="#2c2a29" stroke-width="1.31" opacity="0.46" stroke-linecap="round"/>
<path d="M742.6 399.0 C744.9 399.8 751.6 402.3 756.4 403.9 C761.2 405.5 766.2 406.7 771.2 408.4 C776.2 410.1 781.9 412.4 786.5 414.1 C791.1 415.8 794.7 416.9 799.0 418.4 C803.3 419.9 808.0 421.7 812.2 423.3 C816.4 424.9 822.1 427.2 824.1 428.0" fill="none" stroke="#2c2a29" stroke-width="1.33" opacity="0.51" stroke-linecap="round"/>
<path d="M725.1 379.1 C728.2 379.1 737.3 378.9 744.0 379.1 C750.7 379.3 757.7 379.4 765.1 380.4 C772.5 381.3 780.8 383.3 788.5 384.8 C796.2 386.3 803.7 387.2 811.3 389.6 C818.9 392.0 826.9 395.4 834.2 398.9 C841.5 402.4 851.7 408.5 855.2 410.4" fill="none" stroke="#2c2a29" stroke-width="1.33" opacity="0.5" stroke-linecap="round"/>
<path d="M737.0 381.7 C740.9 381.9 752.2 382.1 760.5 383.1 C768.8 384.1 778.0 385.9 786.7 387.6 C795.4 389.3 804.1 390.5 812.7 393.5 C821.4 396.5 830.5 401.2 838.6 405.5 C846.7 409.8 854.1 414.7 861.1 419.2 C868.1 423.7 877.4 430.4 880.6 432.7" fill="none" stroke="#2c2a29" stroke-width="0.93" opacity="0.53" stroke-linecap="round"/>
<path d="M745.5 399.6 C749.0 400.6 759.4 403.2 766.4 405.6 C773.4 408.0 780.9 411.5 787.6 413.9 C794.3 416.3 800.5 417.9 806.6 420.2 C812.7 422.5 817.9 424.4 824.0 427.6 C830.1 430.8 837.1 435.5 843.5 439.6 C849.9 443.8 859.2 450.4 862.3 452.5" fill="none" stroke="#2c2a29" stroke-width="1.2" opacity="0.26" stroke-linecap="round"/>
<path d="M749.5 378.3 C752.4 378.3 760.9 377.6 767.0 378.2 C773.1 378.8 779.6 380.6 786.0 381.8 C792.4 383.0 798.9 383.6 805.5 385.5 C812.1 387.4 819.3 390.3 825.9 393.2 C832.5 396.1 839.1 399.4 845.0 402.6 C850.9 405.8 858.7 410.7 861.4 412.3" fill="none" stroke="#2c2a29" stroke-width="0.76" opacity="0.4" stroke-linecap="round"/>
<path d="M762.5 392.1 C764.7 392.6 770.9 393.7 775.6 394.9 C780.3 396.1 786.1 398.0 790.9 399.4 C795.6 400.8 799.8 402.0 804.1 403.3 C808.4 404.6 812.4 405.4 816.8 407.0 C821.2 408.6 825.8 410.6 830.3 412.9 C834.8 415.2 841.5 419.5 843.8 420.8" fill="none" stroke="#2c2a29" stroke-width="1.1" opacity="0.42" stroke-linecap="round"/>
<path d="M746.9 387.8 C749.4 388.3 756.8 390.0 761.7 390.9 C766.6 391.8 771.1 392.1 776.3 393.3 C781.5 394.5 787.5 396.5 792.7 397.9 C797.9 399.3 802.7 400.1 807.6 401.8 C812.5 403.5 817.0 405.8 821.9 408.1 C826.8 410.4 834.6 414.2 837.1 415.4" fill="none" stroke="#2c2a29" stroke-width="1.24" opacity="0.59" stroke-linecap="round"/>
<path d="M734.5 376.2 C738.2 376.1 749.4 375.7 756.9 375.9 C764.4 376.1 771.6 376.3 779.7 377.3 C787.8 378.3 796.8 379.5 805.4 382.1 C814.0 384.7 823.2 389.0 831.6 392.7 C840.0 396.4 848.6 400.2 855.9 404.4 C863.2 408.6 872.1 415.8 875.3 418.1" fill="none" stroke="#2c2a29" stroke-width="1.02" opacity="0.47" stroke-linecap="round"/>
<path d="M764.1 388.5 C765.2 388.6 768.3 388.8 770.9 389.3 C773.5 389.8 776.7 390.8 779.5 391.4 C782.3 392.0 784.8 392.5 787.6 393.2 C790.4 393.9 793.5 394.9 796.3 395.6 C799.1 396.3 801.6 396.6 804.2 397.2 C806.8 397.8 810.5 398.7 811.7 399.0" fill="none" stroke="#2c2a29" stroke-width="1.18" opacity="0.54" stroke-linecap="round"/>
<path d="M723.5 381.4 C728.0 381.4 740.6 381.0 750.2 381.7 C759.8 382.4 770.3 383.8 781.0 385.6 C791.7 387.4 803.5 388.9 814.3 392.7 C825.1 396.4 836.1 402.5 845.9 408.1 C855.7 413.7 865.7 420.9 872.9 426.3 C880.1 431.7 886.6 438.0 889.3 440.3" fill="none" stroke="#2c2a29" stroke-width="1.25" opacity="0.27" stroke-linecap="round"/>
<path d="M754.9 380.4 C756.7 380.6 762.2 381.2 765.7 381.6 C769.2 382.0 772.3 382.0 775.8 382.6 C779.3 383.2 783.0 384.4 786.6 385.1 C790.2 385.8 793.5 386.1 797.1 386.8 C800.7 387.5 804.7 388.2 808.4 389.3 C812.1 390.4 817.6 392.9 819.5 393.6" fill="none" stroke="#2c2a29" stroke-width="1.02" opacity="0.55" stroke-linecap="round"/>
<path d="M730.0 389.0 C732.8 389.4 740.6 390.5 746.8 391.5 C753.0 392.5 760.4 393.8 767.0 395.2 C773.6 396.6 779.9 398.1 786.3 399.8 C792.7 401.6 799.0 403.6 805.3 405.7 C811.5 407.8 817.4 409.5 823.8 412.4 C830.1 415.3 840.1 421.3 843.4 423.1" fill="none" stroke="#2c2a29" stroke-width="0.92" opacity="0.53" stroke-linecap="round"/>
<path d="M714.4 378.7 C718.0 378.2 728.6 376.4 736.2 376.0 C743.8 375.6 751.7 375.4 760.1 376.1 C768.5 376.8 777.4 378.4 786.6 380.0 C795.8 381.6 805.9 382.6 815.3 385.7 C824.6 388.8 834.2 393.7 842.7 398.3 C851.2 402.9 862.5 410.8 866.5 413.3" fill="none" stroke="#2c2a29" stroke-width="0.7" opacity="0.52" stroke-linecap="round"/>
<path d="M712.7 379.7 C715.4 379.6 723.6 379.0 728.9 378.9 C734.2 378.8 738.9 378.7 744.6 379.0 C750.3 379.3 756.8 380.1 763.0 380.7 C769.2 381.3 775.4 381.8 781.9 382.9 C788.4 384.0 795.3 385.7 801.8 387.5 C808.3 389.3 817.6 392.5 820.7 393.5" fill="none" stroke="#2c2a29" stroke-width="1.26" opacity="0.47" stroke-linecap="round"/>
<path d="M724.5 388.0 C727.0 388.4 734.0 389.6 739.3 390.4 C744.6 391.2 750.9 391.8 756.5 392.9 C762.1 394.0 767.3 395.5 773.2 396.9 C779.1 398.3 786.1 399.8 792.0 401.4 C797.9 402.9 803.0 404.1 808.3 406.2 C813.6 408.3 821.3 412.5 823.9 413.8" fill="none" stroke="#2c2a29" stroke-width="0.71" opacity="0.28" stroke-linecap="round"/>
<path d="M718.5 391.4 C723.0 392.4 735.9 394.9 745.4 397.2 C754.9 399.5 765.9 402.2 775.6 405.3 C785.3 408.4 794.4 412.0 803.6 415.7 C812.8 419.4 822.0 422.6 830.9 427.5 C839.8 432.4 849.1 440.5 856.9 445.4 C864.6 450.3 874.0 454.9 877.4 456.8" fill="none" stroke="#2c2a29" stroke-width="1.15" opacity="0.32" stroke-linecap="round"/>
<path d="M754.0 379.0 C757.1 379.1 766.0 378.9 772.6 379.8 C779.2 380.7 786.7 382.5 793.7 384.2 C800.8 385.9 807.8 387.4 814.9 389.9 C822.0 392.3 829.4 395.6 836.3 398.9 C843.2 402.1 850.3 405.7 856.2 409.4 C862.1 413.1 869.2 419.1 871.8 421.0" fill="none" stroke="#2c2a29" stroke-width="0.94" opacity="0.37" stroke-linecap="round"/>
<path d="M745.5 389.3 C747.0 389.5 751.1 390.1 754.3 390.6 C757.5 391.1 761.3 391.8 764.5 392.3 C767.7 392.9 770.1 393.2 773.3 393.9 C776.5 394.5 780.2 395.2 783.6 396.2 C787.0 397.2 790.7 398.9 793.9 400.0 C797.1 401.1 801.5 402.2 803.0 402.6" fill="none" stroke="#2c2a29" stroke-width="1.1" opacity="0.39" stroke-linecap="round"/>
<path d="M757.2 383.5 C759.2 383.7 765.2 384.3 769.2 384.9 C773.2 385.5 777.1 386.2 781.4 387.1 C785.7 388.0 790.6 389.0 795.0 390.0 C799.4 391.0 803.5 391.8 807.6 393.1 C811.8 394.4 815.8 396.1 819.9 397.7 C824.0 399.3 830.2 402.1 832.2 403.0" fill="none" stroke="#2c2a29" stroke-width="0.98" opacity="0.25" stroke-linecap="round"/>
<path d="M768.7 392.8 C772.7 393.8 785.4 396.6 792.9 398.7 C800.4 400.8 806.6 402.6 813.7 405.3 C820.8 408.1 828.5 411.3 835.7 415.2 C842.9 419.1 850.3 424.6 856.7 428.8 C863.1 433.0 869.4 436.8 874.2 440.3 C879.0 443.8 883.7 448.1 885.6 449.6" fill="none" stroke="#2c2a29" stroke-width="0.69" opacity="0.29" stroke-linecap="round"/>
<path d="M714.9 385.0 C717.6 385.4 725.6 386.9 731.2 387.6 C736.8 388.3 742.5 388.4 748.5 389.3 C754.5 390.2 761.1 391.5 767.5 392.9 C773.9 394.3 780.4 396.0 786.7 397.5 C793.0 399.0 799.1 400.0 805.1 402.0 C811.1 404.0 820.0 408.4 823.0 409.7" fill="none" stroke="#2c2a29" stroke-width="0.64" opacity="0.58" stroke-linecap="round"/>
<path d="M734.1 389.6 C738.8 390.5 752.4 392.6 762.1 394.7 C771.8 396.8 782.6 399.6 792.3 402.5 C802.0 405.4 811.0 407.9 820.4 412.2 C829.8 416.5 840.2 422.7 848.9 428.1 C857.6 433.6 866.2 440.3 872.8 444.9 C879.4 449.5 885.9 453.7 888.5 455.5" fill="none" stroke="#2c2a29" stroke-width="0.62" opacity="0.52" stroke-linecap="round"/>
<path d="M748.3 377.6 C749.9 377.8 754.9 378.3 758.1 378.6 C761.3 378.9 764.2 379.0 767.4 379.2 C770.5 379.4 773.6 379.5 777.0 380.0 C780.4 380.5 784.1 381.7 787.6 382.3 C791.1 382.9 794.2 383.0 797.8 383.8 C801.4 384.6 807.2 386.5 809.1 387.0" fill="none" stroke="#2c2a29" stroke-width="0.72" opacity="0.59" stroke-linecap="round"/>
<path d="M745.3 387.0 C747.1 387.2 752.3 387.8 756.1 388.3 C759.9 388.9 764.0 389.5 767.9 390.3 C771.8 391.1 775.4 392.3 779.4 393.3 C783.4 394.3 787.6 395.1 791.6 396.1 C795.6 397.1 799.2 398.2 803.1 399.3 C807.0 400.4 812.8 402.4 814.7 403.0" fill="none" stroke="#2c2a29" stroke-width="1.4" opacity="0.58" stroke-linecap="round"/>
<path d="M717.4 389.2 C719.3 389.4 725.0 389.6 728.8 390.1 C732.6 390.6 736.1 391.5 740.2 392.0 C744.3 392.5 748.9 392.7 753.3 393.1 C757.7 393.5 762.3 394.2 766.6 394.5 C770.9 394.8 774.9 394.7 779.2 395.1 C783.6 395.5 790.5 396.4 792.7 396.7" fill="none" stroke="#2c2a29" stroke-width="1.88" opacity="0.51" stroke-linecap="round"/>
<path d="M716.0 378.1 C718.2 378.0 725.0 377.5 729.5 377.4 C734.0 377.3 738.1 377.6 743.2 377.7 C748.3 377.8 754.6 378.0 760.1 378.2 C765.6 378.4 770.8 378.0 776.3 378.7 C781.8 379.4 787.4 380.9 793.2 382.1 C799.0 383.4 808.0 385.5 811.0 386.2" fill="none" stroke="#2c2a29" stroke-width="1.07" opacity="0.54" stroke-linecap="round"/>
<path d="M724.0 390.9 C726.8 391.4 735.0 393.0 740.9 393.8 C746.8 394.6 753.1 395.0 759.4 395.5 C765.7 396.0 772.8 396.4 778.9 396.9 C785.0 397.4 790.2 398.0 796.0 398.3 C801.8 398.6 808.7 398.6 813.7 398.8 C818.7 399.0 823.9 399.2 825.9 399.3" fill="none" stroke="#2c2a29" stroke-width="1.88" opacity="0.53" stroke-linecap="round"/>
<path d="M721.3 378.5 C723.5 378.4 730.1 377.6 734.7 377.6 C739.3 377.6 743.8 378.2 748.8 378.3 C753.8 378.4 759.1 378.1 764.6 378.5 C770.1 378.9 776.1 379.7 781.6 380.5 C787.1 381.3 792.4 382.1 797.7 383.2 C803.0 384.3 811.0 386.6 813.6 387.3" fill="none" stroke="#2c2a29" stroke-width="1.37" opacity="0.54" stroke-linecap="round"/>
<path d="M723.6 389.7 C726.5 390.0 734.9 391.1 741.2 391.7 C747.5 392.2 754.5 392.4 761.2 393.0 C768.0 393.6 774.9 395.0 781.7 395.5 C788.5 396.0 795.8 395.6 801.9 396.0 C808.0 396.4 813.2 397.1 818.3 397.6 C823.4 398.1 830.0 398.9 832.3 399.2" fill="none" stroke="#2c2a29" stroke-width="1.39" opacity="0.57" stroke-linecap="round"/>
<path d="M727.2 387.2 C729.4 387.4 735.3 388.2 740.2 388.5 C745.1 388.8 751.4 388.8 756.5 389.2 C761.6 389.6 766.0 390.1 771.1 390.6 C776.2 391.1 782.0 391.6 787.3 392.1 C792.6 392.6 798.2 393.4 803.1 393.8 C808.0 394.2 814.3 394.6 816.5 394.7" fill="none" stroke="#2c2a29" stroke-width="1.55" opacity="0.78" stroke-linecap="round"/>
<path d="M713.1 378.6 C715.9 378.5 723.9 377.9 729.7 377.9 C735.5 377.8 741.7 378.2 748.0 378.3 C754.3 378.4 760.8 377.9 767.7 378.5 C774.6 379.1 782.1 380.6 789.2 381.8 C796.3 383.0 804.5 384.3 810.4 385.9 C816.3 387.5 822.1 390.4 824.4 391.3" fill="none" stroke="#2c2a29" stroke-width="1.67" opacity="0.67" stroke-linecap="round"/>
<path d="M725.8 386.4 C728.4 386.6 735.7 387.4 741.2 387.9 C746.7 388.4 752.8 388.9 758.7 389.4 C764.6 389.9 770.6 390.3 776.5 390.8 C782.4 391.3 788.3 391.7 794.0 392.3 C799.7 392.9 805.9 393.7 810.9 394.3 C815.9 394.9 821.6 395.7 823.8 396.0" fill="none" stroke="#2c2a29" stroke-width="1.42" opacity="0.55" stroke-linecap="round"/>
<path d="M730.6 390.4 C732.6 390.7 738.4 391.6 742.8 392.0 C747.1 392.4 752.3 392.5 756.7 392.9 C761.1 393.3 764.9 393.7 769.2 394.2 C773.5 394.7 778.4 395.8 782.7 396.1 C787.0 396.4 790.6 395.8 794.8 396.0 C799.0 396.2 805.6 397.2 807.8 397.4" fill="none" stroke="#2c2a29" stroke-width="1.91" opacity="0.51" stroke-linecap="round"/>
<path d="M714.1 379.7 C716.2 379.5 722.7 378.9 726.7 378.6 C730.7 378.4 734.0 378.1 738.3 378.2 C742.6 378.3 747.6 379.0 752.4 379.2 C757.2 379.4 762.1 379.2 767.1 379.5 C772.1 379.8 777.5 380.2 782.4 381.0 C787.3 381.8 794.4 383.8 796.8 384.4" fill="none" stroke="#2c2a29" stroke-width="1.91" opacity="0.62" stroke-linecap="round"/>
<path d="M729.4 386.5 C731.7 386.8 738.4 388.0 743.0 388.4 C747.6 388.8 752.0 388.9 756.8 389.1 C761.5 389.4 766.5 389.5 771.5 389.9 C776.5 390.3 781.8 391.3 786.5 391.7 C791.2 392.1 795.3 392.1 799.8 392.5 C804.3 392.9 811.3 394.1 813.6 394.4" fill="none" stroke="#2c2a29" stroke-width="1.8" opacity="0.75" stroke-linecap="round"/>
<path d="M714.9 386.5 C717.0 386.7 723.6 387.4 727.8 387.9 C731.9 388.4 735.6 389.2 739.8 389.6 C744.0 390.0 748.3 389.9 752.8 390.2 C757.3 390.5 762.0 391.2 766.6 391.6 C771.2 392.0 775.6 392.4 780.3 392.8 C785.0 393.2 792.4 393.9 794.8 394.1" fill="none" stroke="#2c2a29" stroke-width="1.08" opacity="0.59" stroke-linecap="round"/>
<path d="M714.2 388.8 C716.8 389.1 724.8 389.9 730.0 390.5 C735.2 391.1 740.0 391.7 745.5 392.3 C751.0 392.9 757.3 393.5 763.1 394.0 C768.9 394.5 774.5 395.0 780.2 395.4 C785.9 395.8 791.5 395.9 797.1 396.2 C802.7 396.4 810.9 396.8 813.6 396.9" fill="none" stroke="#2c2a29" stroke-width="1.83" opacity="0.61" stroke-linecap="round"/>
<path d="M712.9 382.6 C715.1 382.6 721.9 382.8 726.3 382.8 C730.7 382.8 734.6 382.5 739.5 382.7 C744.4 382.9 750.0 383.9 755.4 384.2 C760.8 384.5 766.5 384.3 771.7 384.7 C776.9 385.1 781.3 385.6 786.6 386.3 C791.9 387.0 800.6 388.2 803.4 388.6" fill="none" stroke="#2c2a29" stroke-width="1.56" opacity="0.66" stroke-linecap="round"/>
<path d="M727.9 377.1 C730.5 377.0 737.8 376.3 743.4 376.2 C749.0 376.1 755.4 376.3 761.4 376.6 C767.4 376.9 773.1 377.2 779.2 378.1 C785.4 379.0 792.4 380.5 798.3 381.9 C804.2 383.3 810.0 385.0 814.8 386.6 C819.6 388.2 825.0 390.6 827.1 391.4" fill="none" stroke="#2c2a29" stroke-width="1.56" opacity="0.75" stroke-linecap="round"/>
<path d="M707.8 390.0 C705.4 391.9 698.2 396.8 693.7 401.1 C689.2 405.4 684.7 410.8 680.7 415.9 C676.7 421.0 673.2 426.0 669.9 432.0 C666.6 438.0 663.1 445.6 660.7 451.7 C658.3 457.8 656.9 463.2 655.3 468.6 C653.7 474.1 651.7 481.8 651.0 484.4" fill="none" stroke="#2c2a29" stroke-width="1.82" opacity="0.46" stroke-linecap="round"/>
<path d="M690.0 394.0 C687.6 396.2 680.2 402.1 675.6 407.0 C671.0 411.9 665.9 417.6 662.2 423.7 C658.5 429.8 656.1 437.1 653.4 443.7 C650.7 450.2 648.0 456.6 645.8 463.0 C643.6 469.4 641.5 476.4 640.2 481.8 C638.9 487.2 638.4 493.0 638.0 495.2" fill="none" stroke="#2c2a29" stroke-width="0.92" opacity="0.57" stroke-linecap="round"/>
<path d="M710.0 398.3 C708.1 400.7 702.2 407.5 698.8 412.7 C695.3 417.9 692.3 423.9 689.3 429.4 C686.3 434.9 683.1 440.2 680.6 445.8 C678.1 451.4 676.2 458.2 674.5 463.1 C672.8 468.0 671.4 471.8 670.2 475.2 C669.0 478.6 667.7 482.2 667.2 483.6" fill="none" stroke="#2c2a29" stroke-width="1.53" opacity="0.75" stroke-linecap="round"/>
<path d="M703.7 386.5 C701.2 388.1 693.5 392.2 688.6 396.1 C683.7 400.0 678.7 404.9 674.4 409.8 C670.1 414.7 666.1 419.8 662.6 425.7 C659.1 431.6 656.1 439.0 653.4 445.4 C650.7 451.8 648.2 457.9 646.2 464.2 C644.2 470.5 642.1 480.0 641.3 483.1" fill="none" stroke="#2c2a29" stroke-width="1.89" opacity="0.77" stroke-linecap="round"/>
<path d="M712.1 398.5 C710.4 401.0 705.0 408.0 701.8 413.3 C698.6 418.6 695.6 424.9 692.7 430.5 C689.8 436.1 686.6 441.4 684.3 446.8 C681.9 452.2 680.2 458.5 678.6 463.0 C677.0 467.5 676.0 470.2 674.9 473.6 C673.8 477.0 672.3 481.6 671.8 483.2" fill="none" stroke="#2c2a29" stroke-width="1.8" opacity="0.68" stroke-linecap="round"/>
<path d="M700.5 416.5 C699.8 417.6 697.7 420.9 696.5 423.1 C695.3 425.3 694.6 427.5 693.5 429.8 C692.4 432.1 691.1 434.5 689.9 436.9 C688.7 439.3 687.5 441.8 686.5 444.0 C685.5 446.2 684.8 448.0 684.0 450.1 C683.2 452.2 682.0 455.5 681.6 456.6" fill="none" stroke="#2c2a29" stroke-width="1.86" opacity="0.67" stroke-linecap="round"/>
<path d="M690.4 403.3 C688.9 405.3 684.4 411.2 681.4 415.3 C678.4 419.4 674.9 423.6 672.2 427.9 C669.5 432.2 667.6 436.4 665.2 441.1 C662.8 445.8 659.7 451.7 657.9 456.3 C656.1 460.9 655.4 464.6 654.3 468.6 C653.2 472.6 651.6 478.5 651.1 480.5" fill="none" stroke="#2c2a29" stroke-width="1.8" opacity="0.53" stroke-linecap="round"/>
<path d="M699.5 418.9 C698.2 421.1 694.4 427.9 692.0 432.3 C689.6 436.7 686.8 441.1 684.9 445.5 C683.0 449.9 681.9 454.7 680.5 458.6 C679.1 462.5 677.5 466.0 676.4 469.1 C675.3 472.2 674.9 475.1 674.1 477.5 C673.3 479.9 672.0 482.4 671.6 483.4" fill="none" stroke="#2c2a29" stroke-width="1.24" opacity="0.51" stroke-linecap="round"/>
<path d="M688.6 397.8 C687.0 399.4 681.9 404.1 678.9 407.3 C675.9 410.5 673.2 413.6 670.4 417.2 C667.6 420.8 664.6 424.9 662.2 429.1 C659.8 433.3 658.0 438.3 656.1 442.6 C654.2 446.9 652.1 450.9 650.6 455.1 C649.1 459.3 647.7 465.6 647.1 467.7" fill="none" stroke="#2c2a29" stroke-width="0.83" opacity="0.48" stroke-linecap="round"/>
<path d="M692.0 405.3 C690.2 407.6 684.9 414.2 681.3 419.2 C677.7 424.2 673.5 430.1 670.5 435.5 C667.5 440.9 665.4 446.4 663.4 451.8 C661.4 457.2 660.2 462.9 658.7 467.7 C657.2 472.5 655.4 477.0 654.3 480.9 C653.2 484.8 652.3 489.6 651.9 491.3" fill="none" stroke="#2c2a29" stroke-width="1.79" opacity="0.49" stroke-linecap="round"/>
<path d="M697.7 401.1 C695.7 403.3 689.3 409.5 685.7 414.1 C682.1 418.7 679.2 423.4 676.1 428.5 C673.0 433.6 669.6 439.4 667.1 444.7 C664.6 450.0 662.7 455.3 660.9 460.4 C659.1 465.5 657.7 470.7 656.4 475.1 C655.1 479.5 653.8 485.0 653.3 487.0" fill="none" stroke="#2c2a29" stroke-width="1.66" opacity="0.59" stroke-linecap="round"/>
<path d="M703.9 385.1 C701.6 386.4 694.5 389.7 690.3 392.7 C686.1 395.7 682.6 399.4 678.8 403.3 C675.0 407.2 670.8 411.3 667.4 415.8 C664.0 420.3 661.6 425.1 658.7 430.1 C655.8 435.1 652.4 440.5 650.2 445.9 C648.0 451.2 646.2 459.5 645.4 462.2" fill="none" stroke="#2c2a29" stroke-width="1.1" opacity="0.69" stroke-linecap="round"/>
<path d="M686.2 394.8 C685.0 396.0 681.3 399.5 679.0 401.9 C676.7 404.3 674.5 406.8 672.3 409.3 C670.0 411.8 667.6 414.6 665.5 417.1 C663.4 419.6 661.4 421.5 659.8 424.2 C658.2 426.9 657.3 430.3 655.9 433.4 C654.5 436.5 652.2 441.4 651.5 443.0" fill="none" stroke="#2c2a29" stroke-width="1.79" opacity="0.68" stroke-linecap="round"/>
<path d="M706.0 404.5 C704.1 407.3 698.3 415.5 694.8 421.3 C691.3 427.1 687.6 433.5 684.8 439.3 C682.0 445.1 680.0 451.0 677.9 456.4 C675.8 461.8 673.7 467.1 672.2 471.4 C670.7 475.7 669.8 479.2 669.0 482.1 C668.2 485.0 667.7 487.7 667.4 488.8" fill="none" stroke="#2c2a29" stroke-width="1.66" opacity="0.47" stroke-linecap="round"/>
<path d="M702.8 406.7 C701.5 408.1 697.2 412.2 695.0 415.4 C692.8 418.6 691.6 422.6 689.6 426.0 C687.6 429.4 684.5 432.6 682.7 436.0 C680.9 439.4 680.2 442.7 678.7 446.3 C677.2 449.9 675.2 454.3 673.8 457.7 C672.3 461.1 670.6 465.3 670.0 466.8" fill="none" stroke="#2c2a29" stroke-width="1.47" opacity="0.76" stroke-linecap="round"/>
<path d="M705.7 406.3 C704.6 408.0 701.1 413.1 698.9 416.7 C696.7 420.3 694.5 424.2 692.4 427.7 C690.3 431.2 688.0 434.4 686.2 437.9 C684.4 441.3 682.9 444.8 681.4 448.4 C679.9 452.0 678.6 456.1 677.4 459.4 C676.2 462.7 674.7 466.7 674.2 468.1" fill="none" stroke="#2c2a29" stroke-width="1.45" opacity="0.44" stroke-linecap="round"/>
<path d="M710.0 400.7 C708.1 403.1 702.0 410.0 698.6 415.0 C695.2 420.0 692.4 425.4 689.7 430.7 C687.0 436.0 684.7 441.3 682.4 446.7 C680.1 452.1 677.4 458.7 675.7 463.2 C674.0 467.7 673.5 470.4 672.4 473.8 C671.3 477.2 669.6 482.0 669.0 483.6" fill="none" stroke="#2c2a29" stroke-width="0.84" opacity="0.51" stroke-linecap="round"/>
<path d="M709.7 400.2 C708.2 402.1 703.6 407.7 701.0 411.9 C698.4 416.1 696.6 421.2 694.2 425.6 C691.8 430.0 689.1 434.0 686.8 438.4 C684.5 442.8 682.4 447.5 680.5 451.8 C678.6 456.1 676.7 460.8 675.5 464.4 C674.3 468.0 673.7 471.7 673.3 473.2" fill="none" stroke="#2c2a29" stroke-width="1.17" opacity="0.84" stroke-linecap="round"/>
<path d="M703.1 409.3 C701.4 412.1 696.0 420.7 692.7 426.4 C689.4 432.1 685.9 437.5 683.2 443.3 C680.5 449.1 678.4 456.1 676.4 461.2 C674.4 466.2 672.5 469.9 671.1 473.6 C669.7 477.3 668.6 480.7 667.8 483.6 C667.0 486.5 666.5 489.9 666.3 491.1" fill="none" stroke="#2c2a29" stroke-width="1.68" opacity="0.62" stroke-linecap="round"/>
<path d="M706.3 393.9 C704.5 395.7 699.1 401.0 695.5 404.9 C691.9 408.8 688.3 412.8 684.8 417.2 C681.3 421.6 677.3 426.2 674.4 431.2 C671.5 436.2 669.9 441.9 667.6 447.0 C665.3 452.1 662.5 457.0 660.8 461.7 C659.0 466.4 657.7 472.8 657.1 475.0" fill="none" stroke="#2c2a29" stroke-width="1.23" opacity="0.82" stroke-linecap="round"/>
<path d="M711.5 397.4 C709.5 400.1 703.4 408.1 699.7 413.6 C696.1 419.1 692.6 424.8 689.6 430.3 C686.6 435.8 684.2 441.2 681.8 446.7 C679.4 452.2 677.2 458.3 675.3 463.1 C673.4 467.9 671.8 472.1 670.6 475.6 C669.5 479.1 668.8 482.7 668.4 484.1" fill="none" stroke="#2c2a29" stroke-width="1.47" opacity="0.62" stroke-linecap="round"/>
<path d="M705.1 384.8 C702.5 386.5 694.6 390.8 689.5 394.8 C684.4 398.8 679.4 403.8 674.7 408.9 C670.1 414.0 665.3 419.3 661.6 425.3 C657.9 431.3 655.4 438.2 652.6 444.7 C649.9 451.2 647.1 458.0 645.1 464.5 C643.1 471.0 641.6 480.7 640.9 483.9" fill="none" stroke="#2c2a29" stroke-width="1.23" opacity="0.79" stroke-linecap="round"/>
<path d="M694.7 392.7 C693.1 393.5 687.9 395.1 685.0 397.6 C682.1 400.1 680.0 404.5 677.4 407.6 C674.8 410.7 671.8 412.9 669.3 416.1 C666.8 419.3 664.5 423.0 662.3 426.6 C660.1 430.2 658.1 433.9 656.2 437.7 C654.4 441.5 652.0 447.7 651.2 449.7" fill="none" stroke="#2c2a29" stroke-width="1.66" opacity="0.52" stroke-linecap="round"/>
<path d="M708.4 392.7 C706.3 394.5 699.9 399.6 696.0 403.6 C692.1 407.7 688.4 412.3 684.8 417.0 C681.2 421.7 677.5 426.5 674.5 431.6 C671.5 436.7 669.4 442.4 667.1 447.7 C664.8 453.0 662.5 458.5 660.9 463.4 C659.3 468.3 658.1 474.8 657.6 477.1" fill="none" stroke="#2c2a29" stroke-width="1.33" opacity="0.52" stroke-linecap="round"/>
<path d="M697.6 415.2 C696.7 416.3 693.7 419.5 692.2 421.9 C690.7 424.3 689.9 426.8 688.5 429.5 C687.1 432.2 685.5 435.4 684.0 437.9 C682.5 440.4 680.8 442.1 679.6 444.5 C678.4 446.9 677.9 449.8 676.9 452.4 C675.9 455.0 674.3 459.1 673.8 460.4" fill="none" stroke="#2c2a29" stroke-width="1.78" opacity="0.69" stroke-linecap="round"/>
<path d="M699.4 404.0 C697.5 406.6 691.6 414.2 687.7 419.7 C683.8 425.2 679.4 431.1 676.1 437.0 C672.8 442.9 670.3 449.4 668.0 455.2 C665.7 461.0 663.7 466.8 662.3 471.7 C660.9 476.6 660.2 480.8 659.4 484.4 C658.6 488.0 657.7 491.7 657.4 493.1" fill="none" stroke="#2c2a29" stroke-width="0.95" opacity="0.63" stroke-linecap="round"/>
<path d="M709.7 387.8 C707.3 389.8 699.7 395.4 695.2 399.8 C690.7 404.2 687.0 409.4 682.7 414.5 C678.4 419.6 672.9 424.6 669.4 430.5 C665.9 436.4 664.4 443.5 661.9 449.6 C659.4 455.8 656.4 461.7 654.6 467.4 C652.8 473.1 651.8 481.0 651.3 483.7" fill="none" stroke="#2c2a29" stroke-width="1.68" opacity="0.52" stroke-linecap="round"/>
<path d="M687.1 395.8 C685.6 397.3 680.9 401.9 678.0 404.9 C675.1 407.9 672.3 410.6 669.5 413.9 C666.7 417.2 663.5 420.9 661.1 424.8 C658.7 428.7 657.1 433.0 655.0 437.3 C652.9 441.6 650.4 446.4 648.7 450.5 C647.1 454.6 645.7 460.2 645.1 462.2" fill="none" stroke="#2c2a29" stroke-width="1.07" opacity="0.55" stroke-linecap="round"/>
<path d="M688.6 398.0 C686.1 400.6 678.0 408.1 673.4 413.8 C668.8 419.5 664.8 425.5 661.0 432.0 C657.2 438.5 653.1 446.1 650.5 452.9 C647.9 459.7 647.0 466.6 645.5 472.7 C644.0 478.8 642.4 484.5 641.4 489.4 C640.4 494.3 639.7 500.1 639.4 502.3" fill="none" stroke="#2c2a29" stroke-width="1.08" opacity="0.69" stroke-linecap="round"/>
<path d="M694.9 401.2 C693.5 402.7 689.5 406.9 686.8 410.0 C684.1 413.1 681.1 416.6 678.5 420.1 C675.9 423.6 673.0 427.2 670.9 431.1 C668.8 435.0 667.5 439.6 665.6 443.6 C663.7 447.6 660.7 451.6 659.2 455.3 C657.7 459.1 656.9 464.3 656.4 466.1" fill="none" stroke="#2c2a29" stroke-width="1.0" opacity="0.41" stroke-linecap="round"/>
<path d="M707.9 423.9 C707.1 426.8 704.5 436.2 703.0 441.4 C701.5 446.6 699.8 452.7 699.1 455.0" fill="none" stroke="#303030" stroke-width="1.94" opacity="0.85" stroke-linecap="round" stroke-linejoin="round"/>
<path d="M710.8 427.8 C712.1 430.7 716.3 440.0 718.6 445.3 C720.9 450.6 723.4 457.4 724.4 459.8" fill="none" stroke="#303030" stroke-width="1.06" opacity="0.85" stroke-linecap="round" stroke-linejoin="round"/>
<path d="M718.6 417.1 C720.9 420.2 728.2 429.7 732.2 435.5 C736.2 441.3 740.3 447.7 742.9 452.1 C745.5 456.5 746.9 460.2 747.7 461.8" fill="none" stroke="#303030" stroke-width="1.14" opacity="0.85" stroke-linecap="round" stroke-linejoin="round"/>
<path d="M726.4 420.0 C729.3 422.9 738.4 432.1 743.9 437.5 C749.4 442.9 756.8 449.7 759.4 452.1" fill="none" stroke="#303030" stroke-width="0.97" opacity="0.85" stroke-linecap="round" stroke-linejoin="round"/>
<path d="M743.9 430.7 C746.5 432.8 754.5 439.6 759.4 443.3 C764.2 447.0 770.7 451.4 773.0 453.0" fill="none" stroke="#303030" stroke-width="0.88" opacity="0.85" stroke-linecap="round" stroke-linejoin="round"/>
<path d="M769.1 439.4 C772.0 441.5 780.8 448.4 786.6 452.1 C792.4 455.8 801.2 460.2 804.1 461.8" fill="none" stroke="#303030" stroke-width="2.11" opacity="0.85" stroke-linecap="round" stroke-linejoin="round"/>
<path d="M775.0 438.5 C778.2 440.1 788.2 445.3 794.4 448.2 C800.5 451.1 809.0 454.6 811.9 455.9" fill="none" stroke="#303030" stroke-width="0.88" opacity="0.85" stroke-linecap="round" stroke-linejoin="round"/>
<path d="M796.3 435.5 C797.6 437.1 801.8 442.4 804.1 445.3 C806.4 448.2 808.9 451.7 809.9 453.0" fill="none" stroke="#303030" stroke-width="0.79" opacity="0.85" stroke-linecap="round" stroke-linejoin="round"/>
<path d="M829.4 435.5 C832.6 438.1 843.3 446.6 848.8 451.1 C854.3 455.7 860.1 460.9 862.4 462.8" fill="none" stroke="#303030" stroke-width="1.06" opacity="0.85" stroke-linecap="round" stroke-linejoin="round"/>
<path d="M843.0 433.6 C846.9 436.5 859.8 445.4 866.3 451.1 C872.8 456.8 879.3 464.9 881.9 467.6" fill="none" stroke="#303030" stroke-width="1.06" opacity="0.85" stroke-linecap="round" stroke-linejoin="round"/>
<path d="M858.5 431.6 C861.8 434.2 872.5 443.3 878.0 447.2 C883.5 451.1 889.3 453.7 891.6 455.0" fill="none" stroke="#303030" stroke-width="1.06" opacity="0.85" stroke-linecap="round" stroke-linejoin="round"/>
<path d="M638.9 486.1 C638.2 488.0 636.1 494.1 635.0 497.7 C633.9 501.3 632.6 505.9 632.1 507.5" fill="none" stroke="#303030" stroke-width="0.88" opacity="0.85" stroke-linecap="round" stroke-linejoin="round"/>
<path d="M645.7 484.1 C645.1 486.4 642.8 493.6 641.8 497.7 C640.8 501.8 640.2 506.6 639.9 508.4" fill="none" stroke="#303030" stroke-width="0.79" opacity="0.85" stroke-linecap="round" stroke-linejoin="round"/>
<path d="M658.3 470.5 C657.3 473.1 653.8 482.9 652.5 486.1 C651.2 489.4 650.8 489.4 650.5 490.0" fill="none" stroke="#303030" stroke-width="0.79" opacity="0.85" stroke-linecap="round" stroke-linejoin="round"/>
<path d="M720.5 370.4 C725.0 370.2 738.6 369.2 747.7 369.4 C756.8 369.6 770.5 371.4 775.0 371.8" fill="none" stroke="#303030" stroke-width="0.7" opacity="0.85" stroke-linecap="round" stroke-linejoin="round"/>
<path d="M636.0 553.1 C634.9 546.1 629.9 522.5 629.2 511.3 C628.6 500.1 630.0 496.1 632.1 486.1 C634.2 476.1 637.4 462.5 641.8 451.1 C646.2 439.8 651.7 427.7 658.3 418.0 C664.9 408.3 673.8 399.6 681.6 392.8 C689.4 386.0 695.9 380.6 705.0 377.2 C714.1 373.8 724.4 373.1 736.1 372.4 C747.8 371.7 762.0 371.3 775.0 372.9 C788.0 374.5 800.8 377.5 813.8 382.1 C826.8 386.7 841.4 394.2 852.7 400.5 C864.1 406.8 874.1 413.5 881.9 420.0 C889.7 426.5 894.9 432.6 899.4 439.4 C903.9 446.2 907.5 457.2 909.1 460.8" fill="none" stroke="#303030" stroke-width="1.32" opacity="1" stroke-linecap="round" stroke-linejoin="round"/>
<path d="M629.2 511.3 C629.5 515.2 629.8 527.9 631.1 534.7 C632.4 541.5 635.9 549.3 636.9 552.2" fill="none" stroke="#303030" stroke-width="1.32" opacity="1" stroke-linecap="round" stroke-linejoin="round"/>
<path d="M640.8 539.5 L636.0 554.1" fill="none" stroke="#303030" stroke-width="1.06" opacity="1" stroke-linecap="round" stroke-linejoin="round"/>
<path d="M647.6 547.3 C647.8 548.3 648.1 551.7 648.6 553.1 C649.1 554.5 650.5 555.3 650.9 555.7" fill="none" stroke="#303030" stroke-width="0.7" opacity="0.6" stroke-linecap="round" stroke-linejoin="round"/>
<path d="M679.7 485.7 C679.1 483.3 685.2 480.4 689.4 478.3 C693.6 476.2 700.1 473.8 705.0 473.4 C709.9 473.0 714.7 474.8 718.6 476.0 C722.5 477.2 727.8 478.1 728.3 480.6 C728.8 483.1 725.1 488.2 721.5 490.9 C717.9 493.6 711.6 496.5 706.9 496.8 C702.2 497.1 697.8 494.8 693.3 492.9 C688.8 491.0 680.4 488.1 679.7 485.7Z" fill="#2a2828" opacity="0.95" stroke="none"/>
<path d="M674.8 487.6 L680.7 485.7" fill="none" stroke="#303030" stroke-width="0.88" opacity="1" stroke-linecap="round" stroke-linejoin="round"/>
<path d="M724.4 479.3 L731.8 479.9" fill="none" stroke="#303030" stroke-width="0.88" opacity="1" stroke-linecap="round" stroke-linejoin="round"/>
<path d="M677.8 483.7 L683.6 483.0" fill="none" stroke="#303030" stroke-width="0.7" opacity="1" stroke-linecap="round" stroke-linejoin="round"/>
<path d="M789.5 484.1 C788.9 481.5 792.9 478.4 796.3 476.4 C799.7 474.4 805.3 472.4 809.9 472.1 C814.5 471.8 819.8 473.0 823.6 474.4 C827.4 475.8 831.8 478.2 832.9 480.6 C834.0 483.0 833.2 486.6 830.4 489.0 C827.5 491.4 820.8 494.3 815.8 494.8 C810.8 495.3 804.6 493.7 800.2 491.9 C795.8 490.1 790.1 486.7 789.5 484.1Z" fill="#2a2828" opacity="0.95" stroke="none"/>
<path d="M780.8 483.2 L789.5 482.2" fill="none" stroke="#303030" stroke-width="0.88" opacity="1" stroke-linecap="round" stroke-linejoin="round"/>
<path d="M779.8 488.4 L790.5 486.7" fill="none" stroke="#303030" stroke-width="0.88" opacity="1" stroke-linecap="round" stroke-linejoin="round"/>
<path d="M827.4 476.7 L837.2 476.4" fill="none" stroke="#303030" stroke-width="0.88" opacity="1" stroke-linecap="round" stroke-linejoin="round"/>
<path d="M660.3 521.1 C662.9 519.5 670.0 513.6 675.8 511.3 C681.6 509.0 692.0 508.1 695.3 507.5" fill="none" stroke="#303030" stroke-width="0.79" opacity="0.8" stroke-linecap="round" stroke-linejoin="round"/>
<path d="M810.9 499.3 C814.6 500.0 826.3 501.3 833.3 503.6 C840.3 505.9 849.5 511.7 852.7 513.3" fill="none" stroke="#303030" stroke-width="0.88" opacity="0.8" stroke-linecap="round" stroke-linejoin="round"/>
<path d="M768.2 501.6 C769.0 503.2 771.6 507.9 773.0 511.3 C774.4 514.7 776.8 518.7 776.5 522.0 C776.2 525.3 774.0 529.4 771.1 531.2 C768.2 533.0 762.6 532.9 759.4 532.7 C756.1 532.5 754.0 530.9 751.6 529.8 C749.2 528.7 745.9 526.5 744.8 525.9" fill="none" stroke="#303030" stroke-width="1.32" opacity="1" stroke-linecap="round" stroke-linejoin="round"/>
<path d="M747.7 515.2 C746.4 515.9 741.8 517.9 740.0 519.5 C738.2 521.1 737.0 523.1 736.7 525.0 C736.4 526.9 738.1 529.8 738.4 530.8" fill="none" stroke="#303030" stroke-width="1.23" opacity="1" stroke-linecap="round" stroke-linejoin="round"/>
<path d="M744.8 525.9 C744.5 526.2 743.1 527.1 742.9 527.9 C742.7 528.6 743.4 530.0 743.5 530.4" fill="none" stroke="#303030" stroke-width="1.06" opacity="1" stroke-linecap="round" stroke-linejoin="round"/>
<path d="M778.8 518.7 C780.1 519.8 784.7 523.1 786.6 525.0 C788.5 526.9 789.5 528.3 790.1 529.8 C790.8 531.2 790.4 533.1 790.5 533.7" fill="none" stroke="#303030" stroke-width="1.14" opacity="1" stroke-linecap="round" stroke-linejoin="round"/>
<path d="M773.0 531.8 C774.3 532.1 779.0 534.0 780.8 533.7 C782.6 533.4 783.9 531.1 783.7 529.8 C783.5 528.5 780.4 526.5 779.8 525.9" fill="none" stroke="#303030" stroke-width="0.97" opacity="1" stroke-linecap="round" stroke-linejoin="round"/>
<path d="M714.4 579.5 C717.2 578.2 725.4 574.2 731.2 571.8 C737.0 569.4 745.1 565.7 749.3 565.0 C753.5 564.3 754.1 567.5 756.5 567.4 C758.9 567.3 759.9 564.4 763.7 564.5 C767.5 564.6 774.2 566.7 779.4 567.9 C784.6 569.1 792.4 571.1 795.0 571.8" fill="none" stroke="#303030" stroke-width="0.97" opacity="1" stroke-linecap="round" stroke-linejoin="round"/>
<path d="M727.1 579.9 C727.1 578.4 734.0 575.9 738.5 575.4 C743.0 574.9 749.1 577.2 754.1 577.1 C759.1 577.0 763.3 575.1 768.6 574.6 C773.9 574.1 785.3 572.9 785.9 574.2 C786.5 575.5 777.5 580.8 772.2 582.6 C766.9 584.4 759.7 584.5 754.1 584.8 C748.5 585.1 743.0 585.1 738.5 584.3 C734.0 583.5 727.1 581.4 727.1 579.9Z" fill="#262424" opacity="0.96" stroke="none"/>
<path d="M720.4 583.1 C721.6 583.4 725.3 584.0 727.6 584.8 C729.9 585.6 733.3 587.5 734.4 588.1" fill="none" stroke="#303030" stroke-width="0.88" opacity="1" stroke-linecap="round" stroke-linejoin="round"/>
<path d="M795.0 577.1 C792.4 577.9 783.8 580.1 779.4 581.9 C775.0 583.7 772.0 585.9 768.6 587.9 C765.2 589.9 760.5 592.9 758.9 593.9" fill="none" stroke="#303030" stroke-width="0.88" opacity="1" stroke-linecap="round" stroke-linejoin="round"/>
<path d="M790.2 573.4 L783.0 576.6" fill="none" stroke="#303030" stroke-width="0.79" opacity="1" stroke-linecap="round" stroke-linejoin="round"/>
<path d="M737.7 587.2 C736.0 589.1 730.0 594.8 727.6 598.7 C725.2 602.6 723.7 606.4 723.5 610.8 C723.3 615.2 724.1 620.4 726.4 625.2 C728.7 630.0 732.7 635.7 737.3 639.7 C741.9 643.7 749.3 647.2 754.1 649.3 C758.9 651.4 764.1 651.7 766.1 652.2" fill="none" stroke="#303030" stroke-width="1.5" opacity="1" stroke-linecap="round" stroke-linejoin="round"/>
<path d="M757.7 591.0 C756.3 592.9 751.3 598.4 749.3 602.3 C747.3 606.2 745.9 610.8 745.7 614.4 C745.5 618.0 746.3 621.5 748.1 624.0 C749.9 626.5 752.3 628.0 756.5 629.5 C760.7 631.0 767.4 632.5 773.4 632.9 C779.4 633.3 787.2 632.6 792.6 632.0 C798.0 631.4 803.7 629.9 805.9 629.5" fill="none" stroke="#303030" stroke-width="1.41" opacity="1" stroke-linecap="round" stroke-linejoin="round"/>
<path d="M750.5 605.9 C751.9 605.2 755.9 602.2 758.9 601.6 C761.9 601.0 766.0 601.5 768.6 602.1 C771.2 602.7 773.6 604.7 774.6 605.2" fill="none" stroke="#303030" stroke-width="0.88" opacity="1" stroke-linecap="round" stroke-linejoin="round"/>
<path d="M750.5 625.2 C753.5 625.2 762.4 626.0 768.6 625.2 C774.8 624.4 782.6 621.9 787.8 620.4 C793.0 618.9 796.2 617.4 799.9 616.5 C803.6 615.6 808.3 615.3 810.0 615.1" fill="none" stroke="#303030" stroke-width="1.06" opacity="1" stroke-linecap="round" stroke-linejoin="round"/>
<path d="M650.6 587.9 C652.2 589.1 655.8 592.6 660.2 595.1 C664.6 597.6 670.7 600.7 677.1 603.1 C683.5 605.5 692.3 607.9 698.7 609.6 C705.1 611.3 711.5 612.1 715.6 613.2 C719.7 614.3 722.0 615.6 723.3 616.1" fill="none" stroke="#303030" stroke-width="1.23" opacity="1" stroke-linecap="round" stroke-linejoin="round"/>
<path d="M647.0 548.2 L649.4 554.2" fill="none" stroke="#303030" stroke-width="0.62" opacity="0.5" stroke-linecap="round" stroke-linejoin="round"/>
<path d="M654.2 573.4 L657.8 577.5" fill="none" stroke="#303030" stroke-width="0.62" opacity="0.5" stroke-linecap="round" stroke-linejoin="round"/>
<path d="M638.7 550.7 C636.7 553.8 630.8 563.6 626.5 569.0 C622.2 574.4 618.1 578.2 612.7 582.8 C607.4 587.4 600.5 591.8 594.4 596.5 C588.3 601.2 581.7 605.8 576.1 610.9 C570.5 616.0 565.4 621.4 560.8 627.1 C556.2 632.9 552.2 639.0 548.6 645.4 C545.0 651.8 542.2 658.9 539.4 665.3 C536.6 671.7 534.8 677.0 531.8 683.6 C528.8 690.2 524.9 699.1 521.1 705.0 C517.3 710.9 512.7 715.6 508.9 718.7 C505.1 721.9 501.4 722.8 498.2 723.9 C495.0 725.0 491.3 725.1 489.9 725.4" fill="none" stroke="#303030" stroke-width="1.14" opacity="1" stroke-linecap="round" stroke-linejoin="round"/>
<path d="M662.2 584.3 C659.6 585.5 651.6 588.5 646.4 591.3 C641.2 594.1 636.7 596.9 631.1 601.1 C625.5 605.3 618.8 610.7 612.7 616.4 C606.6 622.1 600.0 628.9 594.4 635.3 C588.8 641.7 583.7 648.5 579.1 654.6 C574.5 660.7 570.5 666.1 566.9 672.0 C563.3 677.9 560.8 684.1 557.8 689.7 C554.8 695.3 551.9 701.1 548.6 705.6 C545.3 710.1 541.7 713.4 537.9 716.6 C534.1 719.8 530.0 722.4 525.7 724.8 C521.4 727.2 516.5 729.5 511.9 730.9 C507.3 732.3 502.4 732.9 498.2 733.1 C494.0 733.3 490.0 733.3 486.9 731.9 C483.8 730.5 480.5 727.2 479.6 724.8 C478.7 722.3 479.6 719.2 481.4 717.2 C483.2 715.2 486.9 713.8 490.5 712.9 C494.1 712.0 498.9 711.9 502.8 712.0 C506.7 712.1 512.0 713.2 513.8 713.5" fill="none" stroke="#303030" stroke-width="1.14" opacity="1" stroke-linecap="round" stroke-linejoin="round"/>
<path d="M489.9 725.4 C491.0 725.0 494.0 724.4 496.7 723.3 C499.4 722.2 503.0 720.3 505.8 718.7 C508.6 717.1 512.5 714.4 513.8 713.5" fill="none" stroke="#303030" stroke-width="0.88" opacity="1" stroke-linecap="round" stroke-linejoin="round"/>
<path d="M815.0 553.5 C815.8 554.4 818.7 555.9 819.6 559.0 C820.5 562.1 820.6 566.8 820.3 572.2 C820.0 577.6 819.0 585.1 817.9 591.5 C816.8 597.9 815.3 604.8 813.8 610.8 C812.3 616.8 810.5 622.5 809.0 627.6 C807.5 632.7 805.4 639.0 804.7 641.3" fill="none" stroke="#303030" stroke-width="1.06" opacity="1" stroke-linecap="round" stroke-linejoin="round"/>
<path d="M859.1 548.9 C857.9 551.0 853.7 556.3 851.6 561.4 C849.5 566.5 848.1 573.3 846.8 579.5 C845.5 585.7 844.5 592.7 843.9 598.7 C843.3 604.7 843.2 608.6 843.2 615.6 C843.2 622.6 843.6 636.7 843.7 640.9" fill="none" stroke="#303030" stroke-width="1.06" opacity="1" stroke-linecap="round" stroke-linejoin="round"/>
<path d="M901.0 527.0 C900.3 529.3 897.7 536.0 896.7 540.9 C895.7 545.8 895.0 551.7 895.0 556.6 C895.0 561.5 896.4 568.0 896.7 570.3" fill="none" stroke="#303030" stroke-width="1.06" opacity="1" stroke-linecap="round" stroke-linejoin="round"/>
<path d="M899.3 531.3 C899.1 534.1 897.9 540.2 898.1 548.2 C898.3 556.2 899.9 574.3 900.3 579.5" fill="none" stroke="#303030" stroke-width="0.88" opacity="1" stroke-linecap="round" stroke-linejoin="round"/>
<path d="M895.7 564.5 C893.8 566.7 888.0 573.5 884.1 577.5 C880.2 581.5 876.3 585.4 872.1 588.6 C867.9 591.8 863.5 594.2 858.9 596.8 C854.3 599.4 846.8 602.8 844.4 604.0" fill="none" stroke="#303030" stroke-width="1.06" opacity="1" stroke-linecap="round" stroke-linejoin="round"/>
<path d="M872.1 588.6 C873.5 591.5 877.7 599.8 880.5 605.9 C883.3 612.0 886.4 618.0 889.0 625.2 C891.6 632.4 894.0 641.5 896.2 649.3 C898.4 657.1 901.4 668.4 902.4 672.2" fill="none" stroke="#303030" stroke-width="1.06" opacity="1" stroke-linecap="round" stroke-linejoin="round"/>
<path d="M844.4 614.4 C846.2 614.6 852.0 614.3 855.2 615.6 C858.4 616.9 861.7 619.1 863.7 622.3 C865.7 625.5 867.3 630.5 867.3 634.8 C867.3 639.1 865.7 644.1 863.7 648.1 C861.7 652.1 858.6 655.7 855.2 658.9 C851.8 662.1 847.6 664.9 843.2 667.4 C838.8 669.9 834.0 672.0 828.8 673.9 C823.6 675.8 817.9 677.2 811.9 678.7 C805.9 680.2 799.0 681.8 792.6 683.0 C786.2 684.2 779.4 685.0 773.4 685.9 C767.4 686.8 762.5 687.4 756.5 688.3 C750.5 689.2 743.3 690.6 737.3 691.4 C731.3 692.2 723.2 692.8 720.4 693.1" fill="none" stroke="#303030" stroke-width="1.41" opacity="1" stroke-linecap="round" stroke-linejoin="round"/>
<path d="M848.5 640.1 C845.6 640.0 838.5 638.8 831.2 639.2 C823.9 639.6 812.3 641.0 804.7 642.5 C797.1 644.0 791.4 646.1 785.4 648.1 C779.4 650.1 774.6 652.2 768.6 654.6 C762.6 657.0 755.7 660.2 749.3 662.5 C742.9 664.8 736.0 667.1 730.0 668.6 C724.0 670.1 718.0 670.3 713.2 671.4 C708.4 672.5 704.9 673.5 701.1 675.1 C697.3 676.7 693.5 678.9 690.3 681.1 C687.1 683.3 683.3 687.1 681.9 688.3" fill="none" stroke="#303030" stroke-width="1.32" opacity="1" stroke-linecap="round" stroke-linejoin="round"/>
<path d="M843.7 640.9 L848.5 640.1" fill="none" stroke="#303030" stroke-width="1.23" opacity="1" stroke-linecap="round" stroke-linejoin="round"/>
<path d="M703.5 673.4 C703.6 671.0 703.4 663.7 704.0 658.9 C704.6 654.1 705.9 649.5 707.2 644.5 C708.5 639.5 710.4 633.6 712.0 628.8 C713.6 624.0 716.0 617.8 716.8 615.6" fill="none" stroke="#303030" stroke-width="0.97" opacity="1" stroke-linecap="round" stroke-linejoin="round"/>
<path d="M729.5 668.6 C729.8 667.0 730.3 661.9 731.2 658.9 C732.1 655.9 733.4 652.9 734.8 650.5 C736.2 648.1 738.9 645.5 739.7 644.5" fill="none" stroke="#303030" stroke-width="0.88" opacity="1" stroke-linecap="round" stroke-linejoin="round"/>
<path d="M705.7 659.1 L714.5 636.9" fill="none" stroke="#303030" stroke-width="0.53" opacity="0.55" stroke-linecap="round" stroke-linejoin="round"/>
<path d="M707.3 657.3 L715.1 636.7" fill="none" stroke="#303030" stroke-width="0.53" opacity="0.55" stroke-linecap="round" stroke-linejoin="round"/>
<path d="M708.2 657.4 L718.8 634.4" fill="none" stroke="#303030" stroke-width="0.53" opacity="0.55" stroke-linecap="round" stroke-linejoin="round"/>
<path d="M710.0 657.8 L719.6 632.5" fill="none" stroke="#303030" stroke-width="0.53" opacity="0.55" stroke-linecap="round" stroke-linejoin="round"/>
<path d="M711.1 658.5 L720.3 637.3" fill="none" stroke="#303030" stroke-width="0.53" opacity="0.55" stroke-linecap="round" stroke-linejoin="round"/>
<path d="M712.4 655.9 L722.3 633.6" fill="none" stroke="#303030" stroke-width="0.53" opacity="0.55" stroke-linecap="round" stroke-linejoin="round"/>
<path d="M713.3 655.4 L723.5 632.3" fill="none" stroke="#303030" stroke-width="0.53" opacity="0.55" stroke-linecap="round" stroke-linejoin="round"/>
<path d="M714.9 657.5 L724.7 637.5" fill="none" stroke="#303030" stroke-width="0.53" opacity="0.55" stroke-linecap="round" stroke-linejoin="round"/>
<path d="M715.9 656.9 L724.9 637.0" fill="none" stroke="#303030" stroke-width="0.53" opacity="0.55" stroke-linecap="round" stroke-linejoin="round"/>
<path d="M717.6 654.5 L725.7 629.7" fill="none" stroke="#303030" stroke-width="0.53" opacity="0.55" stroke-linecap="round" stroke-linejoin="round"/>
<path d="M718.9 655.1 L728.4 630.9" fill="none" stroke="#303030" stroke-width="0.53" opacity="0.55" stroke-linecap="round" stroke-linejoin="round"/>
<path d="M719.7 654.6 L728.4 632.3" fill="none" stroke="#303030" stroke-width="0.53" opacity="0.55" stroke-linecap="round" stroke-linejoin="round"/>
<path d="M721.1 655.8 L730.7 635.8" fill="none" stroke="#303030" stroke-width="0.53" opacity="0.55" stroke-linecap="round" stroke-linejoin="round"/>
<path d="M722.6 655.6 L732.2 630.5" fill="none" stroke="#303030" stroke-width="0.53" opacity="0.55" stroke-linecap="round" stroke-linejoin="round"/>
<path d="M723.8 655.2 L734.1 632.8" fill="none" stroke="#303030" stroke-width="0.53" opacity="0.55" stroke-linecap="round" stroke-linejoin="round"/>
<path d="M724.9 652.7 L735.0 630.3" fill="none" stroke="#303030" stroke-width="0.53" opacity="0.55" stroke-linecap="round" stroke-linejoin="round"/>
<path d="M725.8 651.9 L735.9 632.3" fill="none" stroke="#303030" stroke-width="0.53" opacity="0.55" stroke-linecap="round" stroke-linejoin="round"/>
<path d="M726.8 653.7 L735.7 628.4" fill="none" stroke="#303030" stroke-width="0.53" opacity="0.55" stroke-linecap="round" stroke-linejoin="round"/>
<path d="M728.3 653.2 L738.5 627.4" fill="none" stroke="#303030" stroke-width="0.53" opacity="0.55" stroke-linecap="round" stroke-linejoin="round"/>
<path d="M729.8 650.7 L738.5 629.6" fill="none" stroke="#303030" stroke-width="0.53" opacity="0.55" stroke-linecap="round" stroke-linejoin="round"/>
<path d="M731.4 653.1 L738.5 638.0" fill="none" stroke="#303030" stroke-width="0.53" opacity="0.55" stroke-linecap="round" stroke-linejoin="round"/>
<path d="M732.1 650.1 L738.5 632.5" fill="none" stroke="#303030" stroke-width="0.53" opacity="0.55" stroke-linecap="round" stroke-linejoin="round"/>
<path d="M733.2 650.7 L738.5 636.7" fill="none" stroke="#303030" stroke-width="0.53" opacity="0.55" stroke-linecap="round" stroke-linejoin="round"/>
<path d="M734.3 651.7 L738.5 642.1" fill="none" stroke="#303030" stroke-width="0.53" opacity="0.55" stroke-linecap="round" stroke-linejoin="round"/>
<path d="M736.4 649.9 L738.5 644.7" fill="none" stroke="#303030" stroke-width="0.53" opacity="0.55" stroke-linecap="round" stroke-linejoin="round"/>
<path d="M737.4 650.2 L738.5 647.6" fill="none" stroke="#303030" stroke-width="0.53" opacity="0.55" stroke-linecap="round" stroke-linejoin="round"/>
<path d="M681.9 688.3 C680.3 690.2 675.3 696.2 672.2 699.9 C669.1 703.6 665.7 707.7 663.1 710.7 C660.5 713.7 658.2 715.8 656.6 717.9 C655.0 720.0 654.0 722.6 653.5 723.5" fill="none" stroke="#303030" stroke-width="0.79" opacity="1" stroke-linecap="round" stroke-linejoin="round"/>
<path d="M653.5 723.5 C654.2 722.0 656.6 716.4 657.8 714.3 C659.0 712.2 660.2 711.5 660.7 710.9" fill="none" stroke="#303030" stroke-width="0.62" opacity="1" stroke-linecap="round" stroke-linejoin="round"/>
<path d="M679.5 691.4 C678.1 693.6 673.4 700.3 671.0 704.7 C668.6 709.1 666.2 714.1 665.0 717.9 C663.8 721.7 663.8 725.9 663.6 727.5" fill="none" stroke="#303030" stroke-width="0.7" opacity="1" stroke-linecap="round" stroke-linejoin="round"/>
<path d="M663.6 727.5 C663.5 725.9 662.8 720.5 663.1 717.9 C663.4 715.3 665.1 712.9 665.5 711.9" fill="none" stroke="#303030" stroke-width="0.62" opacity="1" stroke-linecap="round" stroke-linejoin="round"/>
<path d="M665.5 711.9 L672.2 714.3" fill="none" stroke="#303030" stroke-width="0.62" opacity="1" stroke-linecap="round" stroke-linejoin="round"/>
<path d="M672.2 714.3 C673.1 712.7 676.2 707.7 677.5 704.7 C678.8 701.7 679.5 697.6 679.9 696.2" fill="none" stroke="#303030" stroke-width="0.7" opacity="1" stroke-linecap="round" stroke-linejoin="round"/>
<path d="M677.5 704.7 C677.4 705.9 675.7 709.9 676.6 711.9 C677.5 713.9 680.8 715.5 683.1 716.7 C685.4 717.9 688.1 718.4 690.3 719.1 C692.5 719.8 695.3 720.7 696.3 721.0" fill="none" stroke="#303030" stroke-width="0.79" opacity="1" stroke-linecap="round" stroke-linejoin="round"/>
<path d="M684.3 699.9 C685.7 699.4 691.5 695.8 692.7 697.0 C693.9 698.2 692.9 705.3 691.5 707.1 C690.1 708.9 685.4 708.6 684.3 707.6 C683.2 706.6 684.7 702.2 684.8 701.1" fill="none" stroke="#303030" stroke-width="0.7" opacity="1" stroke-linecap="round" stroke-linejoin="round"/>
<path d="M683.1 709.0 C684.5 709.2 690.2 708.9 691.5 710.0 C692.8 711.1 691.1 714.6 691.0 715.5" fill="none" stroke="#303030" stroke-width="0.7" opacity="1" stroke-linecap="round" stroke-linejoin="round"/>
<path d="M694.4 692.6 C694.2 694.2 692.7 699.9 693.4 702.3 C694.1 704.7 696.9 707.2 698.7 707.1 C700.5 707.0 702.8 704.1 704.0 701.8 C705.2 699.5 705.6 694.5 705.9 693.1" fill="none" stroke="#303030" stroke-width="0.79" opacity="1" stroke-linecap="round" stroke-linejoin="round"/>
<path d="M705.9 693.1 C706.8 692.7 708.8 691.2 711.2 690.9 C713.6 690.6 718.9 691.3 720.4 691.4" fill="none" stroke="#303030" stroke-width="1.23" opacity="1" stroke-linecap="round" stroke-linejoin="round"/>
<path d="M716.1 692.6 C715.8 694.6 714.8 700.5 714.4 704.7 C714.0 708.9 713.8 715.7 713.7 717.9" fill="none" stroke="#303030" stroke-width="1.14" opacity="1" stroke-linecap="round" stroke-linejoin="round"/>
<path d="M713.7 712.4 C714.6 712.3 718.1 711.0 719.2 711.9 C720.3 712.8 721.4 716.1 720.4 717.9 C719.4 719.7 716.8 721.5 713.2 722.7 C709.6 723.9 702.9 724.8 698.7 725.1 C694.5 725.4 690.0 725.2 687.9 724.4 C685.8 723.6 686.5 721.0 686.2 720.3" fill="none" stroke="#303030" stroke-width="1.41" opacity="1" stroke-linecap="round" stroke-linejoin="round"/>
<path d="M796.0 683.6 C795.6 687.2 794.7 697.9 793.6 705.0 C792.5 712.1 790.9 718.8 789.3 726.4 C787.7 734.0 786.0 742.9 783.8 750.8 C781.6 758.7 779.0 766.6 776.2 773.7 C773.4 780.8 770.0 787.5 767.0 793.6 C764.0 799.7 760.8 805.8 757.9 810.4 C755.0 815.0 751.5 817.8 749.6 821.1 C747.7 824.4 746.5 827.4 746.6 830.2 C746.7 833.0 747.6 835.8 750.2 837.9 C752.8 840.0 757.8 842.6 762.4 843.1 C767.0 843.6 772.9 841.6 777.7 840.9 C782.6 840.2 786.9 838.6 791.5 838.8 C796.1 838.9 800.1 840.6 805.2 841.8 C810.3 843.0 816.6 845.5 822.0 845.8 C827.4 846.1 832.5 844.1 837.3 843.4 C842.1 842.7 846.4 841.6 851.0 841.5 C855.6 841.4 860.6 843.1 864.8 842.7 C869.0 842.4 873.5 841.1 876.1 839.4 C878.7 837.7 880.0 835.5 880.1 832.7 C880.2 829.9 878.8 827.1 877.0 822.6 C875.2 818.1 872.2 812.2 869.4 805.8 C866.6 799.4 863.2 791.8 860.2 784.4 C857.2 777.0 854.1 769.1 851.6 761.5 C849.1 753.9 847.0 747.0 845.5 738.6 C844.0 730.2 843.4 721.8 842.8 711.1 C842.2 700.4 842.0 680.5 841.9 674.4" fill="none" stroke="#303030" stroke-width="1.32" opacity="1" stroke-linecap="round" stroke-linejoin="round"/>
<path d="M764.0 817.4 C764.6 818.0 765.1 820.5 767.9 821.1 C770.7 821.7 776.1 821.0 780.8 821.1 C785.5 821.2 790.9 821.2 796.0 821.7 C801.1 822.2 806.7 823.6 811.3 824.1 C815.9 824.6 819.2 825.0 823.5 824.7 C827.8 824.5 832.7 823.3 837.3 822.6 C841.9 821.9 846.4 820.2 851.0 820.4 C855.6 820.5 862.5 823.0 864.8 823.5" fill="none" stroke="#303030" stroke-width="0.88" opacity="1" stroke-linecap="round" stroke-linejoin="round"/>
<path d="M785.4 767.6 L785.7 772.2" fill="none" stroke="#303030" stroke-width="0.53" opacity="0.6" stroke-linecap="round" stroke-linejoin="round"/>
<g fill="#8f877d"><circle cx="353" cy="313" r="1.400" opacity=".35"/><circle cx="356" cy="317" r=".800" opacity=".3"/><circle cx="1336" cy="243" r=".900" opacity=".6"/><circle cx="520" cy="830" r=".600" opacity=".4"/><circle cx="297" cy="883" r=".600" opacity=".4"/><circle cx="355" cy="955" r=".600" opacity=".4"/><circle cx="597" cy="760" r=".600" opacity=".35"/></g>
<path d="M953 748 Q968 751 976 750.500 T999 748" fill="none" stroke="#2b2b2b" stroke-width="1"/>
</svg>
<!-- left window edge -->
<div class="abs" style="left:0;top:1079px;width:1920px;height:1px;background:#5a5a5a"></div>
<div class="abs" style="left:0;top:1078px;width:1920px;height:1px;background:#4c4c4c"></div>
<div class="abs" style="left:1919px;top:64px;width:1px;height:1016px;background:#5a5a5a"></div>
<!-- faded wilber -->
<svg style="left:0;top:0" width="180" height="90" viewBox="0 0 180 90">
 <defs><clipPath id="wc"><rect x="0" y="63.300" width="180" height="22.500"/></clipPath></defs>
 <g clip-path="url(#wc)">
  <path d="M8.900 86 L8.900 80 Q9.500 66 23 65.600 Q34 66.500 47 79.700 L47.800 79.700 L48.700 63.300 L167.800 63.300 L164 86 Z" fill="#535353"/>
  <ellipse cx="21.600" cy="79.500" rx="7.500" ry="8.500" fill="#454545"/>
  <circle cx="62.400" cy="74.500" r="13.300" fill="#454545"/>
  <circle cx="67" cy="75.900" r="6.100" fill="#535353"/>
  <circle cx="99.300" cy="74.500" r="20.200" fill="#454545"/>
  <circle cx="104" cy="76.900" r="9.800" fill="#535353"/>
 </g>
</svg>
<!-- active tool -->
<div class="abs" style="left:0;top:88px;width:29px;height:28px;background:#1e1e1e;border-radius:4px"></div>
<svg style="left:0;top:88px" width="175" height="86" viewBox="0 0 175 86" fill="#cfcfcf" stroke="none">
 <!-- row 1 (cy=14) : move -->
 <g fill="#dadada"><path d="M14 5l3.2 3.6h-2.2v4.4h4.4v-2.2l3.6 3.2l-3.6 3.2v-2.2h-4.4v4.4h2.2l-3.2 3.6l-3.2-3.6h2.2v-4.4h-4.4v2.2l-3.6-3.2l3.6-3.2v2.2h4.4v-4.4h-2.2z"/><path d="M26 22v3h-3z"/></g>
 <!-- rect select -->
 <rect x="34.5" y="8.500" width="16" height="12" fill="none" stroke="#cfcfcf" stroke-width="1" stroke-dasharray="1.5 1"/><rect x="37.500" y="11.5" width="10" height="6"/>
 <path d="M55 22v3h-3z"/>
 <!-- lasso -->
 <ellipse cx="72" cy="11" rx="7.500" ry="5" fill="none" stroke="#cfcfcf" stroke-width="1.6"/><path d="M67 14.500q4 1.500 4.500 5q.3 3-2.500 3" fill="none" stroke="#cfcfcf" stroke-width="1.6"/>
 <path d="M84 22v3h-3z"/>
 <!-- fuzzy select -->
 <rect x="94.500" y="5.500" width="12" height="9" fill="none" stroke="#cfcfcf" stroke-width="1" stroke-dasharray="1.5 1"/><circle cx="100.500" cy="10" r="2.500"/><circle cx="97" cy="20" r="2.800" fill="#9a9a9a"/><circle cx="104.500" cy="20" r="2.300" fill="none" stroke="#cfcfcf" stroke-width="1.300"/>
 <path d="M113 22v3h-3z"/>
 <!-- crop -->
 <path d="M124.500 6v13.500h13.500M122 9.500h12.500v12.500" fill="none" stroke="#cfcfcf" stroke-width="2.200"/>
 <!-- transform -->
 <rect x="150" y="5" width="4.500" height="2.200"/><path d="M155 6.500l6.500 6.500" stroke="#cfcfcf" stroke-width="1.600"/><path d="M162.500 10v4.500h-4.500z"/><rect x="157" y="16" width="11" height="7" rx="1"/>
 <path d="M171 22v3h-3z"/>
 <!-- row 2 (cy=42): warp -->
 <path d="M5 50v-7q4-1 6-4q2-6 7-6.500q4 0 4 4l-3 .5q-1-2-3-1q-1 2 1 4q3 3 6 3v7z"/>
 <path d="M26 50v3h-3z"/>
 <!-- bucket -->
 <path d="M38 40l7-5l6 9l-8 5.500z"/><rect x="44" y="33" width="2.600" height="9.500" rx="1.300" fill="#cfcfcf" stroke="#454545" stroke-width=".800"/><path d="M37 40q-3 2-1.500 7q2-3 3.500-4z" fill="#9a9a9a"/>
 <path d="M55 50v3h-3z"/>
 <!-- pencil -->
 <path d="M66 48.500l1.500-4l9-9.500l2.500 2.500l-9 9.500z"/><path d="M77.500 34l1-1q1-.6 2 .3l.6.600q.8 1 0 1.900l-1 1z"/>
 <path d="M84 50v3h-3z"/>
 <!-- eraser -->
 <path d="M102 33.500l6 4l-4 5l-6-4z" fill="#dcdcdc"/><path d="M97.500 39.500l6 4l-3 3.500l-6-4z" fill="#9a9a9a"/><rect x="93" y="49" width="5" height="1.500" fill="#9a9a9a"/><rect x="100" y="49" width="9" height="1.500"/>
 <!-- stamp -->
 <circle cx="130" cy="38" r="2.600"/><path d="M128.500 40h3l.8 4.500h-4.600z"/><path d="M123 45.500h14v4h-14z"/><path d="M128 47h4l-2 2z" fill="#454545"/>
 <path d="M142 50v3h-3z"/>
 <!-- smudge/dodge -->
 <path d="M159 34.500a6.200 5.800 0 1 1 -1.500 11.500q-2.500-.5-3-2.500l-4.500 5l-1.800-1.500l5-5.500q-1.200-4 2-6.500z"/><path d="M159 38q2.500 0 2.300 3.200" fill="none" stroke="#454545" stroke-width="1.300"/>
 <path d="M171 50v3h-3z"/>
 <!-- row 3 (cy=70): paths -->
 <path d="M6.500 64v15" stroke="#cfcfcf" stroke-width="1.400"/><rect x="5" y="62" width="3.200" height="3.200"/><rect x="5" y="70" width="3.200" height="3.200"/><rect x="5" y="77" width="3.200" height="3.200"/><path d="M8 67q3-4.500 10-4.500" fill="none" stroke="#cfcfcf" stroke-width="1.200"/><circle cx="18.500" cy="62.500" r="1.300"/><path d="M15 74q0-2.500 2-2.500v-3h3v3q2 0 2 2.500v6h-7z"/>
 <!-- text -->
 <text x="34.500" y="78" font-family="Liberation Sans,sans-serif" font-weight="700" font-size="23" fill="#cfcfcf">A</text>
 <!-- color picker -->
 <path d="M67.500 77.500l1-3.500l6-7l1.800 1.500l-6 7z"/><path d="M74 65.500l3.500 3l1.500-2q1.600-2.500-.4-4.200q-2-1.500-3.700 1z"/><circle cx="67.500" cy="78.500" r="1.400"/>
 <path d="M84 78v3h-3z"/>
 <!-- zoom -->
 <circle cx="99" cy="67.500" r="5" fill="none" stroke="#cfcfcf" stroke-width="2"/><path d="M102.800 71.500l5 5.500" stroke="#cfcfcf" stroke-width="2.400" stroke-linecap="round"/>
</svg>
<!-- colour swatches -->
<div class="abs" style="left:85px;top:190px;width:24px;height:24px;background:#4a5794;border:1px solid #000;box-shadow:inset 0 0 0 1px #fff"></div>
<div class="abs" style="left:69px;top:176px;width:24px;height:24px;background:#a5322b;border:1px solid #000;box-shadow:inset 0 0 0 1px #fff"></div>
<svg style="left:97px;top:176px" width="13" height="13" viewBox="0 0 13 13" fill="#d2d2d2"><path d="M0 3.500l3.500-3.500v2.500h6v6h2.500l-3.500 3.500l-3.500-3.500h2.500v-4h-4v2.500z"/></svg>
<div class="abs" style="left:74px;top:207px;width:7px;height:7px;background:#fff;border:1px solid #cfcfcf"></div>
<div class="abs" style="left:69px;top:202px;width:7px;height:7px;background:#000;border:1px solid #cfcfcf"></div>
<!-- tool options tabs -->
<div class="abs" style="left:1px;top:224px;width:67px;height:20px;background:#222"></div>
<div class="abs" style="left:23px;top:224px;width:1px;height:20px;background:#303030"></div>
<div class="abs" style="left:45px;top:224px;width:1px;height:20px;background:#303030"></div>
<div class="abs" style="left:0px;top:244px;width:178px;height:835px;border:1px solid #565656;border-bottom:none"></div>
<div class="abs" style="left:68px;top:221px;width:24px;height:24px;background:#454545;border:1px solid #565656;border-bottom:none"></div>
<svg style="left:2px;top:224px" width="90" height="20" viewBox="0 0 90 20" fill="#d2d2d2">
 <path d="M1.800 15.200l1-2.200l8-10.500q1-.800 1.500.200l-6.500 11.500l-2.500 1.800z"/><circle cx="13.100" cy="12.800" r="5"/><rect x="12.300" y="11.800" width="1.700" height="4" fill="#222"/><rect x="12.300" y="9.300" width="1.700" height="1.600" fill="#222"/>
 <path d="M30 6h5.500q3.800 0 3.800 3.300q0 1.700-1.500 2.500" fill="none" stroke="#6e6e6e" stroke-width="2.200"/><path d="M31 2.500l-4.500 3.500l4.500 3.500z" fill="#6e6e6e"/>
 <path d="M28 12.500h5.500q3.800 0 3.800 2.800q0 2.700-3.800 2.700h-1" fill="none" stroke="#d2d2d2" stroke-width="2.200"/><path d="M28.500 8.500l-5 4l5 4z"/>
 <rect x="46" y="1" width="18" height="18" rx="1.500" fill="#000"/><rect x="47" y="2" width="16" height="16" fill="#fff"/><rect x="47" y="4.200" width="16" height="12" fill="#ebe4da"/><path d="M54 8.500q1.500-1.500 3 0M54.500 9.500l-1.500 3M56.500 9.500l1.500 3" stroke="#a09a94" stroke-width=".600" fill="none"/>
 <rect x="70.800" y="3.700" width="14.500" height="9.300" fill="none" stroke="#d2d2d2" stroke-width="1.500"/><path d="M76.500 3l1.500-2l1.500 2z"/><path d="M71 14.500h14M72.500 13.500l-.8 3.800M83.500 13.500l.8 3.800" stroke="#d2d2d2" stroke-width="1.300" fill="none"/>
</svg>
<svg style="left:162px;top:228px" width="10" height="10" viewBox="0 0 10 10"><rect x=".5" y=".5" width="9" height="9" fill="none" stroke="#b8b8b8"/><path d="M7 2.500v5l-4.500-2.500z" fill="#c8c8c8"/></svg>
<!-- tool options content -->
<div class="abs" style="left:2px;top:245px;width:175px;height:16px;background:#3b3b3b"></div>
<div class="t" style="left:3px;top:249px;font-size:11px;font-weight:700;color:#e2e2e2">Move</div>
<div class="t" style="left:3px;top:269px;font-size:11px">Move:</div>
<div class="abs" style="left:35px;top:261px;width:26px;height:26px;background:#212121;border-radius:4px"></div>
<svg style="left:35px;top:261px" width="80" height="26" viewBox="0 0 80 26">
 <path d="M9.500 6h11l-3 3h-11z" fill="#4a4a4a"/><path d="M9.500 10.500h11.500l-4.500 5h-11.500z" fill="#d6d6d6"/><path d="M8 17.500h11l-3 3h-11z" fill="#4a4a4a"/>
 <rect x="31.500" y="5.500" width="15" height="15" fill="none" stroke="#d0d0d0" stroke-width="1" stroke-dasharray="1 1"/><rect x="33.500" y="7.500" width="11" height="11" fill="#636363"/>
 <path d="M58.500 19.500l13-13" stroke="#c8c8c8" stroke-width="1.200"/><circle cx="58.500" cy="19.500" r="1.700" fill="#c8c8c8"/><circle cx="71.500" cy="6.500" r="1.700" fill="#c8c8c8"/><rect x="62.500" y="10.500" width="5" height="5" fill="#c8c8c8"/>
</svg>
<div class="t" style="left:3px;top:293px;font-size:11px">Tool Toggle&nbsp; (Shift)</div>
<svg style="left:16px;top:309px" width="15" height="36" viewBox="0 0 15 36"><circle cx="7.300" cy="7.300" r="6.500" fill="#151515"/><circle cx="7.300" cy="7.300" r="2.300" fill="#fff"/><circle cx="7.300" cy="28.500" r="6.500" fill="#151515"/></svg>
<div class="t" style="left:35px;top:311px;font-size:11px;color:#8b8b8b">Pick a layer or guide</div>
<div class="t" style="left:35px;top:332px;font-size:11px">Move the active layer</div>
<!-- bottom buttons -->
<div class="abs" style="left:2px;top:1051px;width:175px;height:27px;background:#3b3b3b"></div>
<svg style="left:2px;top:1051px" width="175" height="27" viewBox="0 0 175 27" fill="#cfcfcf">
 <path d="M21 6h2.400v5h2.800l-4 4l-4-4h2.800z"/><path d="M17 16.500l1.500-2h2l1.700 1.700l1.700-1.700h2l1.500 2v4.500h-10.400z"/><rect x="20.500" y="18" width="3.400" height="1.200" fill="#3b3b3b"/>
 <path d="M61 9.500a6 6 0 1 1 -1.200 8" fill="none" stroke="#9c9c9c" stroke-width="2"/><path d="M58 6.500h5.500l-5.500 5.500z" fill="#9c9c9c"/>
 <rect x="100" y="5.500" width="16" height="16" fill="#b0b0b0"/><path d="M103 8.500l10 10M113 8.500l-10 10" stroke="#3b3b3b" stroke-width="2.600"/>
 <path d="M146 9.500a6.200 6.200 0 1 1 4.500 9.500" fill="none" stroke="#cfcfcf" stroke-width="2"/><path d="M143 10.500h7l-3.500-4.500z" transform="rotate(-25 146.500 9)"/><circle cx="147.500" cy="19" r="2.500"/>
</svg>
<!-- pane handles -->
<svg style="left:178px;top:563px" width="3" height="16" viewBox="0 0 3 16" fill="#c4c4c4"><rect x="1" y="1" width="1.500" height="2"/><rect x="1" y="6" width="1.500" height="2"/><rect x="1" y="11" width="1.500" height="2"/></svg>
<!-- pane separators -->
<svg style="left:1517px;top:563px" width="3" height="16" viewBox="0 0 3 16" fill="#c4c4c4"><rect x=".5" y="1" width="1.500" height="2"/><rect x=".5" y="6" width="1.500" height="2"/><rect x=".5" y="11" width="1.500" height="2"/></svg>
<!-- brush editor panel -->
<div class="abs" style="left:1519px;top:87px;width:401px;height:297px;background:#3b3b3b;border:1px solid #585858;border-right:none;border-radius:2px 0 0 2px"></div>
<div class="abs" style="left:1520px;top:67px;width:162px;height:20px;background:#222"></div>
<div class="abs" style="left:1544px;top:67px;width:1px;height:20px;background:#303030"></div>
<div class="abs" style="left:1568px;top:67px;width:1px;height:20px;background:#303030"></div>
<div class="abs" style="left:1592px;top:67px;width:1px;height:20px;background:#303030"></div>
<div class="abs" style="left:1659px;top:67px;width:1px;height:20px;background:#303030"></div>
<div class="abs" style="left:1613px;top:64px;width:25px;height:24px;background:#3b3b3b;border:1px solid #565656;border-bottom:none"></div>
<svg style="left:1520px;top:64px" width="170" height="24" viewBox="0 0 170 24">
 <defs>
  <radialGradient id="bg1"><stop offset="0" stop-color="#000"/><stop offset=".35" stop-color="#222"/><stop offset="1" stop-color="#fff"/></radialGradient>
  <linearGradient id="og" x1="0" x2="1" y1="0" y2="0"><stop offset="0" stop-color="#e8861c"/><stop offset=".2" stop-color="#ffc54a"/><stop offset=".35" stop-color="#f39a2a"/><stop offset=".5" stop-color="#ffcf5e"/><stop offset=".65" stop-color="#f5a030"/><stop offset=".8" stop-color="#ffc850"/><stop offset="1" stop-color="#f09428"/></linearGradient>
  <linearGradient id="rg" x1="0" x2="1" y1="0" y2="0"><stop offset="0" stop-color="#b23a30"/><stop offset=".45" stop-color="#a4463e"/><stop offset="1" stop-color="#7c7676"/></linearGradient>
 </defs>
 <rect x="4" y="5" width="16" height="16" fill="#fff"/><circle cx="11" cy="13" r="6" fill="url(#bg1)"/><path d="M17 16v5M14.500 18.500h5" stroke="#2a3ad0" stroke-width="1.300"/><path d="M17 16v4M15 18h4" stroke="#101010" stroke-width="1"/>
 <rect x="27.500" y="4.500" width="17" height="17" fill="#111"/><rect x="28.500" y="5.500" width="15" height="15" fill="url(#og)"/>
 <rect x="52" y="5" width="16" height="16" fill="#fff" stroke="#111"/><text x="53" y="17" font-family="Liberation Sans,sans-serif" font-weight="700" font-size="12" fill="#000" textLength="14" lengthAdjust="spacingAndGlyphs">Aa</text>
 <rect x="76" y="5.500" width="14" height="15" fill="#e4effa" stroke="#111"/><path d="M80 8l-1.500 5" stroke="#6f8fb8" stroke-width="1.200"/>
 <path d="M111 5q1 .3.500 1.500l-5.500 9.500l-2-1.200l6-9.300q.5-.7 1-.5z" fill="#b9b9b9"/><path d="M103.500 15l2.200 1.300q0 2.700-3 3.200l-4.500.2q2.500-.7 3.300-3q.6-1.700 2-1.700z" fill="#b9b9b9"/>
 <rect x="119.500" y="4.500" width="17" height="17" fill="#111"/><rect x="120.500" y="5.500" width="15" height="15" fill="url(#rg)"/>
 <g fill="#b58a86" opacity=".7"><rect x="124.500" y="5.500" width="4" height="4"/><rect x="132.500" y="5.500" width="3" height="4"/><rect x="128.500" y="9.500" width="4" height="4"/><rect x="124.500" y="13.500" width="4" height="4"/><rect x="132.500" y="13.500" width="3" height="4"/><rect x="128.500" y="17.500" width="4" height="3"/></g>
 <rect x="143" y="13" width="17" height="8" fill="#cfcfcf"/>
 <g fill="#111"><rect x="145" y="15" width="2" height="2"/><rect x="149" y="15" width="2" height="2"/><rect x="153" y="15" width="2" height="2"/><rect x="157" y="15" width="2" height="2"/><rect x="147" y="18" width="2" height="2"/><rect x="151" y="18" width="2" height="2"/><rect x="155" y="18" width="2" height="2"/></g>
 <g fill="#cfcfcf"><rect x="145" y="10" width="2" height="2"/><rect x="149" y="10" width="2" height="2"/><rect x="153" y="10" width="2" height="2"/><rect x="157" y="10" width="2" height="2"/><rect x="147" y="7" width="1.500" height="1.500" opacity=".7"/><rect x="151" y="7" width="1.500" height="1.500" opacity=".7"/><rect x="155" y="7" width="1.500" height="1.500" opacity=".7"/><rect x="143" y="12" width="2" height="1.500"/><rect x="147" y="12" width="2" height="1.500"/><rect x="151" y="12" width="2" height="1.500"/><rect x="155" y="12" width="2" height="1.500"/></g>
</svg>
<svg style="left:1904px;top:71px" width="10" height="10" viewBox="0 0 10 10"><rect x=".5" y=".5" width="9" height="9" fill="none" stroke="#b8b8b8"/><path d="M7 2.500v5l-4.500-2.500z" fill="#c8c8c8"/></svg>
<div class="abs" style="left:1523px;top:92px;width:393px;height:17px;background:#222"></div>
<div class="t" style="left:1526px;top:95px;font-size:11px;color:#dfe6ee">2. Hardness 050</div>
<div class="abs" style="left:1523px;top:111px;width:393px;height:135px;background:#fff"></div>
<div class="abs" style="left:1697px;top:156px;width:44px;height:44px;border-radius:50%;background:radial-gradient(circle closest-side,#000 0%,#040404 22%,#2e2e2e 40%,#858585 56%,#c9c9c9 70%,#efefef 84%,#fdfdfd 94%,#fff 100%)"></div>
<svg style="left:1909px;top:239px" width="7" height="7" viewBox="0 0 7 7"><path d="M7 0v7h-7z" fill="#5078d8"/></svg>
<!-- Shape row -->
<div class="t" style="left:1522px;top:255px;font-size:11px;color:#9a9a9a">Shape:</div>
<div class="abs" style="left:1558px;top:247px;width:26px;height:26px;background:#262626;border-radius:4px;border:1px solid #1c1c1c"></div>
<svg style="left:1558px;top:247px" width="80" height="26" viewBox="0 0 80 26" fill="#bdbdbd"><circle cx="13" cy="13" r="6.200"/><rect x="33" y="7" width="12.500" height="12.500"/><path d="M65 6l7 7l-7 7l-7-7z"/></svg>
<div class="abs" style="left:1523px;top:276px;width:393px;height:15px;background:#383838;border:1px solid #3f3f3f"></div>
<div class="abs" style="left:1523px;top:276px;width:8px;height:15px;background:#595959"></div>
<div class="abs" style="left:1531px;top:275px;width:1px;height:17px;background:#0c0c0c"></div>
<div class="t" style="left:1524px;top:278px;font-size:11px;color:#4d4d4d"><span style="color:#e0e0e0">R</span>adius</div>
<div class="t" style="right:17px;top:278px;font-size:11px;color:#4a4a4a">25.0</div>
<svg style="left:1906px;top:276px" width="9" height="14" viewBox="0 0 9 14"><rect x="0" y="0.500" width="9" height="13" fill="#434343"/><path d="M1.500 5.500l3-3l3 3M1.500 8.500l3 3l3-3" fill="none" stroke="#7a7a7a" stroke-width="1.500"/></svg>
<div class="abs" style="left:1523px;top:294px;width:393px;height:15px;background:#383838;border:1px solid #3f3f3f"></div>
<div class="t" style="left:1524px;top:296px;font-size:11px;color:#4d4d4d">Spikes</div>
<div class="t" style="right:17px;top:296px;font-size:11px;color:#4a4a4a">2</div>
<svg style="left:1906px;top:294px" width="9" height="14" viewBox="0 0 9 14"><rect x="0" y="0.500" width="9" height="13" fill="#434343"/><path d="M1.500 5.500l3-3l3 3M1.500 8.500l3 3l3-3" fill="none" stroke="#7a7a7a" stroke-width="1.500"/></svg>
<div class="abs" style="left:1523px;top:312px;width:393px;height:15px;background:#383838;border:1px solid #3f3f3f"></div>
<div class="abs" style="left:1523px;top:312px;width:190px;height:15px;background:#595959"></div>
<div class="abs" style="left:1713px;top:311px;width:1px;height:17px;background:#0c0c0c"></div>
<div class="t" style="left:1524px;top:314px;font-size:11px;color:#e0e0e0">Hardness</div>
<div class="t" style="right:17px;top:314px;font-size:11px;color:#4a4a4a">0.50</div>
<svg style="left:1906px;top:312px" width="9" height="14" viewBox="0 0 9 14"><rect x="0" y="0.500" width="9" height="13" fill="#434343"/><path d="M1.500 5.500l3-3l3 3M1.500 8.500l3 3l3-3" fill="none" stroke="#7a7a7a" stroke-width="1.500"/></svg>
<div class="abs" style="left:1523px;top:330px;width:393px;height:15px;background:#383838;border:1px solid #3f3f3f"></div>
<div class="t" style="left:1524px;top:332px;font-size:11px;color:#4d4d4d">Aspect ratio</div>
<div class="t" style="right:17px;top:332px;font-size:11px;color:#4a4a4a">1.0</div>
<svg style="left:1906px;top:330px" width="9" height="14" viewBox="0 0 9 14"><rect x="0" y="0.500" width="9" height="13" fill="#434343"/><path d="M1.500 5.500l3-3l3 3M1.500 8.500l3 3l3-3" fill="none" stroke="#7a7a7a" stroke-width="1.500"/></svg>
<div class="abs" style="left:1523px;top:348px;width:393px;height:15px;background:#383838;border:1px solid #3f3f3f"></div>
<div class="t" style="left:1524px;top:350px;font-size:11px;color:#4d4d4d">Angle</div>
<div class="t" style="right:17px;top:350px;font-size:11px;color:#4a4a4a">0.0</div>
<svg style="left:1906px;top:348px" width="9" height="14" viewBox="0 0 9 14"><rect x="0" y="0.500" width="9" height="13" fill="#434343"/><path d="M1.500 5.500l3-3l3 3M1.500 8.500l3 3l3-3" fill="none" stroke="#7a7a7a" stroke-width="1.500"/></svg>
<div class="abs" style="left:1523px;top:366px;width:393px;height:15px;background:#383838;border:1px solid #3f3f3f"></div>
<div class="abs" style="left:1523px;top:366px;width:15px;height:15px;background:#595959"></div>
<div class="abs" style="left:1538px;top:365px;width:1px;height:17px;background:#0c0c0c"></div>
<div class="t" style="left:1524px;top:368px;font-size:11px;color:#4d4d4d"><span style="color:#e0e0e0">Sp</span>acing</div>
<div class="t" style="right:17px;top:368px;font-size:11px;color:#4a4a4a">10.0</div>
<svg style="left:1906px;top:366px" width="9" height="14" viewBox="0 0 9 14"><rect x="0" y="0.500" width="9" height="13" fill="#434343"/><path d="M1.500 5.500l3-3l3 3M1.500 8.500l3 3l3-3" fill="none" stroke="#7a7a7a" stroke-width="1.500"/></svg>
<svg style="left:1709px;top:383px" width="20" height="3" viewBox="0 0 20 3" fill="#c4c4c4"><rect x="1" y="1" width="4" height="1.500"/><rect x="8" y="1" width="4" height="1.500"/><rect x="15" y="1" width="4" height="1.500"/></svg>
<div class="abs" style="left:1519px;top:410px;width:401px;height:669px;background:#3b3b3b;border:1px solid #585858;border-right:none;border-bottom:none"></div>
<div class="abs" style="left:1579px;top:390px;width:121px;height:20px;background:#222"></div>
<div class="abs" style="left:1648px;top:390px;width:1px;height:20px;background:#303030"></div>
<div class="abs" style="left:1519px;top:387px;width:60px;height:24px;background:#3b3b3b;border:1px solid #585858;border-bottom:none;border-radius:2px 2px 0 0"></div>
<svg style="left:1520px;top:387px" width="185" height="24" viewBox="0 0 185 24">
 <g fill="#cdcdcd"><path d="M5.200 4h12.300l-2.600 4h-12.900z"/><path d="M5.200 10h12.300l-2.600 4h-12.900z"/><path d="M5.200 16h12.300l-2.600 4h-12.900z"/></g>
 <rect x="61" y="6.500" width="14" height="14" fill="none" stroke="#d2d2d2" stroke-width="1.300"/><path d="M64.500 9v9M68 9v9M71.500 9v9" stroke="#d2d2d2" stroke-width="1.300"/>
 <path d="M131 12h15" stroke="#d2d2d2" stroke-width="1.200"/><path d="M132.500 20q1-6.500 6-6.500t6 6.500" fill="none" stroke="#d2d2d2" stroke-width="1.800"/><rect x="130" y="9.500" width="4" height="3.500" fill="#d2d2d2"/><rect x="143" y="9.500" width="4" height="3.500" fill="#d2d2d2"/><rect x="136.500" y="9" width="4" height="3" fill="#d2d2d2"/>
</svg>
<div class="t" style="left:1540px;top:394px;font-size:11px;color:#e2e2e2">Layers</div>
<div class="t" style="left:1598px;top:395px;font-size:11px;color:#d2d2d2">Channels</div>
<div class="t" style="left:1668px;top:395px;font-size:11px;color:#d2d2d2">Paths</div>
<svg style="left:1904px;top:394px" width="10" height="10" viewBox="0 0 10 10"><rect x=".5" y=".5" width="9" height="9" fill="none" stroke="#b8b8b8"/><path d="M7 2.500v5l-4.500-2.500z" fill="#c8c8c8"/></svg>
<div class="abs" style="left:1522px;top:413px;width:348px;height:28px;background:#292929;border:1px solid #1a1a1a;border-radius:4px"></div>
<div class="t" style="left:1529px;top:422px;font-size:11px;color:#e0e0e0">Mode</div>
<div class="t" style="left:1809px;top:422px;font-size:11px;color:#e0e0e0">Normal</div>
<svg style="left:1851px;top:423px" width="13" height="8" viewBox="0 0 13 8"><path d="M1 1.200l5.500 5.300l5.500-5.300" fill="none" stroke="#e4e4e4" stroke-width="1.500"/></svg>
<div class="abs" style="left:1872px;top:413px;width:45px;height:28px;background:#292929;border:1px solid #1a1a1a;border-radius:4px"></div>
<svg style="left:1876px;top:419px" width="16" height="16" viewBox="0 0 16 16"><path d="M4 5.500a5.200 5.200 0 1 1 4 8.500" fill="none" stroke="#d6d6d6" stroke-width="1.600"/><path d="M1 6.500h6l-3-4.500z" fill="#d6d6d6" transform="rotate(-20 4 5)"/><circle cx="4.500" cy="12.500" r="2.200" fill="#d6d6d6"/></svg>
<svg style="left:1898px;top:423px" width="13" height="8" viewBox="0 0 13 8"><path d="M1 1.200l5.500 5.300l5.500-5.300" fill="none" stroke="#e4e4e4" stroke-width="1.500"/></svg>
<div class="abs" style="left:1522px;top:443px;width:395px;height:15px;background:#575757;border:1px solid #6e6e6e"></div>
<div class="abs" style="left:1904px;top:443px;width:1px;height:15px;background:#0c0c0c"></div>
<div class="t" style="left:1524px;top:445px;font-size:11px;color:#e4e4e4">Opacity</div>
<div class="t" style="right:17px;top:445px;font-size:11px;color:#e4e4e4">100.0</div>
<svg style="left:1906px;top:444px" width="9" height="14" viewBox="0 0 9 14"><path d="M1.500 5.500l3-3l3 3M1.500 8.500l3 3l3-3" fill="none" stroke="#b0b0b0" stroke-width="1.500"/></svg>
<div class="t" style="left:1522px;top:467px;font-size:11px;color:#dedede">Lock:</div>
<svg style="left:1554px;top:463px" width="74" height="18" viewBox="0 0 74 18">
 <path d="M16 .800q1 .400.400 1.500l-5.300 9l-2.200-1.300l6-8.700q.5-.700 1.100-.500z" fill="#cfcfcf"/><path d="M8.400 10.600l2.300 1.400q0 2.800-3.100 3.400l-5 .3q2.700-.8 3.500-3.100q.7-1.900 2.300-2z" fill="#cfcfcf"/>
 <path d="M35.500 1.500l2.600 3h-1.900v3.800h3.800v-1.900l3 2.600l-3 2.600v-1.900h-3.800v3.800h1.900l-2.600 3l-2.600-3h1.900v-3.800h-3.800v1.900l-3-2.600l3-2.600v1.900h3.800v-3.800h-1.900z" fill="#cfcfcf"/>
 <g fill="#cfcfcf"><rect x="55" y="1" width="4" height="4"/><rect x="63" y="1" width="4" height="4"/><rect x="59" y="5" width="4" height="4"/><rect x="67" y="5" width="4" height="4"/><rect x="55" y="9" width="4" height="4"/><rect x="63" y="9" width="4" height="4"/><rect x="59" y="13" width="4" height="4"/><rect x="67" y="13" width="4" height="4"/></g>
 <g fill="#7a7a7a"><rect x="59" y="1" width="4" height="4"/><rect x="67" y="1" width="4" height="4"/><rect x="55" y="5" width="4" height="4"/><rect x="63" y="5" width="4" height="4"/><rect x="59" y="9" width="4" height="4"/><rect x="67" y="9" width="4" height="4"/><rect x="55" y="13" width="4" height="4"/><rect x="63" y="13" width="4" height="4"/></g>
</svg>
<div class="abs" style="left:1522px;top:485px;width:395px;height:566px;background:#303030;border-radius:2px"></div>
<div class="abs" style="left:1523px;top:485px;width:394px;height:32px;background:#212121"></div>
<svg style="left:1527px;top:494px" width="20" height="14" viewBox="0 0 20 14"><path d="M1 7q9-10.500 18 0q-9 10.500-18 0z" fill="none" stroke="#cdcdcd" stroke-width="2"/><circle cx="10" cy="6.800" r="3.400" fill="#cdcdcd"/><circle cx="9" cy="5.800" r="1" fill="#212121"/></svg>
<div class="abs" style="left:1598px;top:488px;width:36px;height:27px;background:#e9e3d9;border:2px solid #fff"></div>
<svg style="left:1598px;top:488px" width="36" height="27" viewBox="0 0 36 27"><path d="M14 11q3-4 7-1M14.500 12q-1 4-4 6M20.500 12q1.500 4 4 5M16.500 13q.5 4 0 8M18.500 13q0 4 .5 7" stroke="#8a8580" stroke-width=".7" fill="none" opacity=".6"/></svg>
<div class="t" style="left:1638px;top:496px;font-size:11px;font-weight:700;color:#f0f0f0">Babyhead.png</div>
<svg style="left:1520px;top:1051px" width="400" height="27" viewBox="0 0 400 27" fill="none" stroke="#d0d0d0" stroke-width="1.300">
 <path d="M25 7.500h3.500l3 3v9h-9v-6.500"/><path d="M22 4.500v7M18.500 8h7" stroke-width="2"/>
 <path d="M67.500 7h5l1.500 2h8v11h-14.500z" fill="#d0d0d0" stroke="none"/><path d="M74.500 11v6M71.500 14h6" stroke="#3b3b3b" stroke-width="1.600"/>
 <path d="M117.500 16l6-6l6 6" stroke-width="1.700"/>
 <path d="M166.500 10.500l6 6l6-6" stroke-width="1.700"/>
 <rect x="216.500" y="7.500" width="8" height="6.500"/><rect x="221.500" y="12.500" width="8" height="6.500" fill="#3b3b3b"/>
 <g fill="#d0d0d0" stroke="none"><path d="M264 7.500h8l-2 2.500h-8z"/><path d="M264 11.500h8l-2 2.500h-8z"/><path d="M264 15.500h8l-2 2.500h-8z"/><path d="M275.500 7h2v8.500h2l-3 4l-3-4h2z"/></g>
 <g fill="#d0d0d0" stroke="none"><path d="M314 5.500h10v6q0 2.500-5 3q-5-.5-5-3z"/><path d="M310.500 20.500l3.500-5h7l6.500 1.500l-3.500 3.500z"/></g><rect x="316" y="7.500" width="2" height="1.500" fill="#3b3b3b" stroke="none"/><rect x="320" y="7.500" width="2" height="1.500" fill="#3b3b3b" stroke="none"/><path d="M317 11.500q2 1.200 4 0" stroke="#3b3b3b" stroke-width="1"/>
 <rect x="363" y="5" width="16" height="16" rx="1.500" fill="#cacaca" stroke="none"/><path d="M366.500 8.500l9 9M375.500 8.500l-9 9" stroke="#3b3b3b" stroke-width="2.400"/>
</svg>
<div class="t" style="left:205px;top:1057px;font-size:13px;color:#dedede">955, 450</div>
<div class="abs" style="left:279px;top:1049px;width:45px;height:29px;background:#292929;border:1px solid #1a1a1a;border-radius:4px"></div>
<div class="t" style="left:285px;top:1057px;font-size:12px;color:#e0e0e0">px</div>
<svg style="left:306px;top:1059px" width="13" height="8" viewBox="0 0 13 8"><path d="M1 1.200l5.500 5.300l5.500-5.300" fill="none" stroke="#e4e4e4" stroke-width="1.500"/></svg>
<div class="abs" style="left:325px;top:1049px;width:36px;height:29px;background:#333"></div>
<div class="t" style="left:328px;top:1057px;font-size:11.500px;color:#e0e0e0">66.7 %</div>
<div class="abs" style="left:361px;top:1049px;width:17px;height:29px;background:#292929;border:1px solid #1a1a1a;border-radius:4px"></div>
<svg style="left:363px;top:1059px" width="13" height="8" viewBox="0 0 13 8"><path d="M1 1.200l5.500 5.300l5.500-5.300" fill="none" stroke="#e4e4e4" stroke-width="1.500"/></svg>
<div class="t" style="left:381px;top:1057px;font-size:13px;color:#dedede">Convert the image to grayscale</div>
<div class="menu" id="m1" style="left:902px;top:462px;width:146px;height:286px">
<div class="tear" style="left:1px;right:0;top:8px"></div>
<div class="mi" style="top:18px;right:0;padding-left:24px">File<svg class="arr" style="right:5px;top:5px" width="10" height="14" viewBox="0 0 10 14"><path d="M2.5 1.5L7.4 7L2.5 12.5" fill="none" stroke="#e6e6e6" stroke-width="1.5"/></svg></div>
<div class="mi" style="top:42px;right:0;padding-left:24px">Edit<svg class="arr" style="right:5px;top:5px" width="10" height="14" viewBox="0 0 10 14"><path d="M2.5 1.5L7.4 7L2.5 12.5" fill="none" stroke="#e6e6e6" stroke-width="1.5"/></svg></div>
<div class="mi" style="top:66px;right:0;padding-left:24px">Select<svg class="arr" style="right:5px;top:5px" width="10" height="14" viewBox="0 0 10 14"><path d="M2.5 1.5L7.4 7L2.5 12.5" fill="none" stroke="#e6e6e6" stroke-width="1.5"/></svg></div>
<div class="mi" style="top:90px;right:0;padding-left:24px">View<svg class="arr" style="right:5px;top:5px" width="10" height="14" viewBox="0 0 10 14"><path d="M2.5 1.5L7.4 7L2.5 12.5" fill="none" stroke="#e6e6e6" stroke-width="1.5"/></svg></div>
<div class="mi sel" style="top:114px;right:0;padding-left:24px">Image<svg class="arr" style="right:5px;top:5px" width="10" height="14" viewBox="0 0 10 14"><path d="M2.5 1.5L7.4 7L2.5 12.5" fill="none" stroke="#e6e6e6" stroke-width="1.5"/></svg></div>
<div class="mi" style="top:138px;right:0;padding-left:24px">Layer<svg class="arr" style="right:5px;top:5px" width="10" height="14" viewBox="0 0 10 14"><path d="M2.5 1.5L7.4 7L2.5 12.5" fill="none" stroke="#e6e6e6" stroke-width="1.5"/></svg></div>
<div class="mi" style="top:162px;right:0;padding-left:24px">Colors<svg class="arr" style="right:5px;top:5px" width="10" height="14" viewBox="0 0 10 14"><path d="M2.5 1.5L7.4 7L2.5 12.5" fill="none" stroke="#e6e6e6" stroke-width="1.5"/></svg></div>
<div class="mi" style="top:186px;right:0;padding-left:24px">Tools<svg class="arr" style="right:5px;top:5px" width="10" height="14" viewBox="0 0 10 14"><path d="M2.5 1.5L7.4 7L2.5 12.5" fill="none" stroke="#e6e6e6" stroke-width="1.5"/></svg></div>
<div class="mi" style="top:210px;right:0;padding-left:24px">Filters<svg class="arr" style="right:5px;top:5px" width="10" height="14" viewBox="0 0 10 14"><path d="M2.5 1.5L7.4 7L2.5 12.5" fill="none" stroke="#e6e6e6" stroke-width="1.5"/></svg></div>
<div class="mi" style="top:234px;right:0;padding-left:24px">Windows<svg class="arr" style="right:5px;top:5px" width="10" height="14" viewBox="0 0 10 14"><path d="M2.5 1.5L7.4 7L2.5 12.5" fill="none" stroke="#e6e6e6" stroke-width="1.5"/></svg></div>
<div class="mi" style="top:258px;right:0;padding-left:24px">Help<svg class="arr" style="right:5px;top:5px" width="10" height="14" viewBox="0 0 10 14"><path d="M2.5 1.5L7.4 7L2.5 12.5" fill="none" stroke="#e6e6e6" stroke-width="1.5"/></svg></div>
</div>
<div class="menu" id="m2" style="left:1047px;top:458px;width:266px;height:640px">
<div class="tear" style="left:1px;right:1px;top:8px"></div>
<div class="mi " style="top:18px;padding-left:24px">Duplicate<b>Ctrl+D</b></div>
<div class="sep" style="left:7px;right:7px;top:48px"></div>
<div class="mi sel" style="top:58px;padding-left:24px">Mode<svg class="arr" style="right:5px;top:5px" width="10" height="14" viewBox="0 0 10 14"><path d="M2.5 1.5L7.4 7L2.5 12.5" fill="none" stroke="#e6e6e6" stroke-width="1.5"/></svg></div>
<div class="mi " style="top:82px;padding-left:24px">Precision<svg class="arr" style="right:5px;top:5px" width="10" height="14" viewBox="0 0 10 14"><path d="M2.5 1.5L7.4 7L2.5 12.5" fill="none" stroke="#e6e6e6" stroke-width="1.5"/></svg></div>
<div class="mi " style="top:106px;padding-left:24px">Color Management<svg class="arr" style="right:5px;top:5px" width="10" height="14" viewBox="0 0 10 14"><path d="M2.5 1.5L7.4 7L2.5 12.5" fill="none" stroke="#e6e6e6" stroke-width="1.5"/></svg></div>
<div class="sep" style="left:7px;right:7px;top:136px"></div>
<div class="mi " style="top:146px;padding-left:24px">Transform<svg class="arr" style="right:5px;top:5px" width="10" height="14" viewBox="0 0 10 14"><path d="M2.5 1.5L7.4 7L2.5 12.5" fill="none" stroke="#e6e6e6" stroke-width="1.5"/></svg></div>
<div class="mi " style="top:170px;padding-left:24px">Canvas Size...</div>
<div class="mi " style="top:194px;padding-left:24px">Fit Canvas to Layers</div>
<div class="mi dis" style="top:218px;padding-left:24px">Fit Canvas to Selection</div>
<div class="mi " style="top:242px;padding-left:24px">Print Size...</div>
<div class="mi " style="top:266px;padding-left:24px">Scale Image...</div>
<div class="sep" style="left:7px;right:7px;top:296px"></div>
<div class="mi dis" style="top:306px;padding-left:24px">Crop to Selection</div>
<div class="mi " style="top:330px;padding-left:24px">Crop to Content</div>
<div class="mi " style="top:354px;padding-left:24px">Slice Using Guides</div>
<div class="mi " style="top:378px;padding-left:24px">Zealous Crop</div>
<div class="sep" style="left:7px;right:7px;top:408px"></div>
<div class="mi " style="top:418px;padding-left:24px">Merge Visible Layers...<b>Ctrl+M</b></div>
<div class="mi " style="top:442px;padding-left:24px">Flatten Image</div>
<div class="mi " style="top:466px;padding-left:24px">Align Visible Layers...</div>
<div class="sep" style="left:7px;right:7px;top:496px"></div>
<div class="mi " style="top:506px;padding-left:24px">Guides<svg class="arr" style="right:5px;top:5px" width="10" height="14" viewBox="0 0 10 14"><path d="M2.5 1.5L7.4 7L2.5 12.5" fill="none" stroke="#e6e6e6" stroke-width="1.5"/></svg></div>
<div class="mi " style="top:530px;padding-left:24px">Configure Grid...</div>
<div class="sep" style="left:7px;right:7px;top:560px"></div>
<div class="mi " style="top:570px;padding-left:24px">Image Properties<b>Alt+Return</b></div>
<div class="mi " style="top:594px;padding-left:24px">Metadata<svg class="arr" style="right:5px;top:5px" width="10" height="14" viewBox="0 0 10 14"><path d="M2.5 1.5L7.4 7L2.5 12.5" fill="none" stroke="#e6e6e6" stroke-width="1.5"/></svg></div>
</div>
<div class="menu" id="m3" style="left:1311px;top:514px;width:126px;height:94px">
<div class="tear" style="left:1px;right:1px;top:8px"></div>
<div class="mi" style="top:18px;padding-left:24px"><u>R</u>GB</div>
<div class="mi sel" style="top:42px;padding-left:24px"><u>G</u>rayscale</div>
<div class="mi" style="top:66px;padding-left:24px"><u>I</u>ndexed...</div>
<svg style="left:9px;top:23px" width="14" height="14" viewBox="0 0 14 14"><circle cx="7" cy="7" r="6.5" fill="#161616"/><circle cx="7" cy="7" r="2.2" fill="#ffffff"/></svg>
<svg style="left:9px;top:71px" width="14" height="14" viewBox="0 0 14 14"><circle cx="7" cy="7" r="6.5" fill="#161616"/></svg>
</div>
<svg style="left:1410px;top:564px" width="14" height="21" viewBox="0 0 14 21"><path d="M1.5 1.5V16.5L5 13.2L7.6 19.2L10 18.2L7.4 12.3H12.3Z" fill="#101010" stroke="#ffffff" stroke-width="1.3" stroke-linejoin="round"/></svg>
</body>
</html>
